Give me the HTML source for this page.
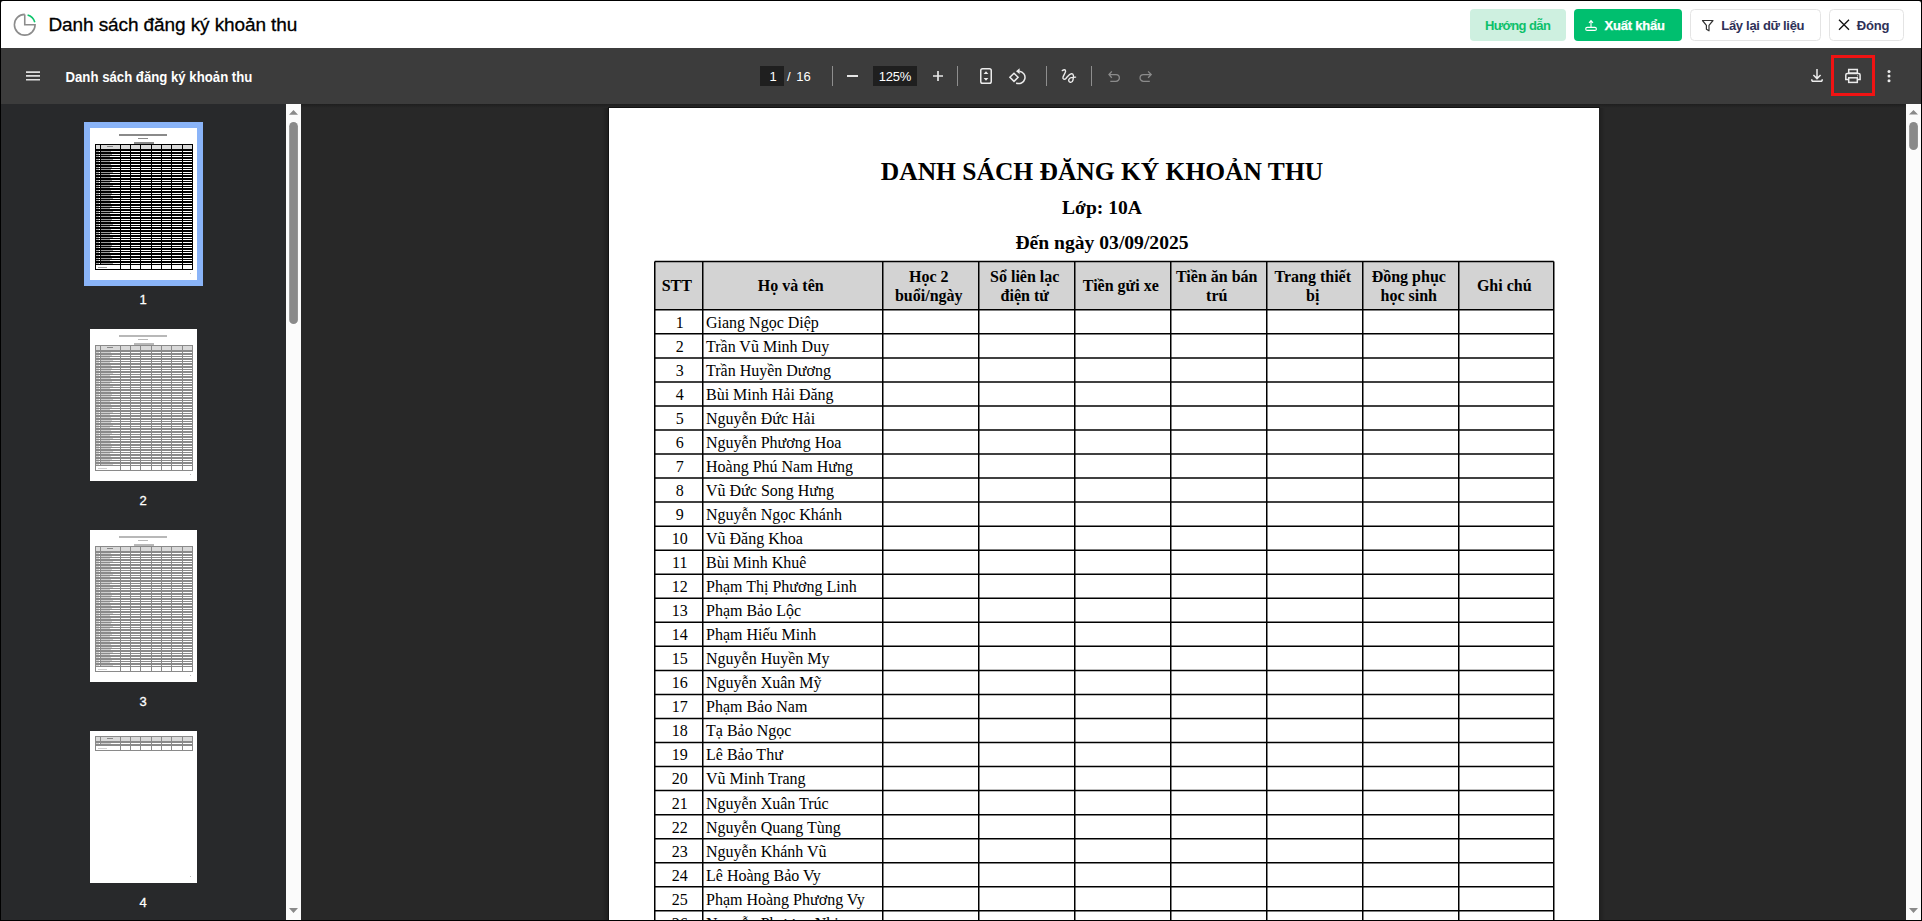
<!DOCTYPE html><html><head><meta charset="utf-8"><style>
*{margin:0;padding:0;box-sizing:border-box}
html,body{width:1922px;height:921px;overflow:hidden;background:#000;font-family:"Liberation Sans",sans-serif}
.a{position:absolute}
#hdr{left:1px;top:1px;width:1920px;height:47px;background:#fff;border-radius:2px 2px 0 0}
#tb{left:1px;top:48px;width:1920px;height:56px;background:#3c3c3c}
#side{left:1px;top:104px;width:285px;height:816px;background:#28292b}
#main{left:301px;top:104px;width:1605px;height:816px;background:#282828;overflow:hidden}
.sb{background:#fbfbfb;width:15px;height:816px;top:104px}
.btn{top:9px;height:32px;border-radius:4px;font-size:14px;font-weight:bold;line-height:32px;white-space:nowrap}
.ser{font-family:"Liberation Serif",serif;color:#000;white-space:nowrap}
</style></head><body>
<div id="hdr" class="a"></div>
<svg class="a" style="left:0;top:0" width="1922" height="48" viewBox="0 0 1922 48">
<path d="M24.75 14.6 V24.75 H35.1 A10.35 10.35 0 1 1 24.75 14.4" fill="none" stroke="#8c8c8c" stroke-width="1.6"/>
<path d="M27.6 15.1 A10.35 10.35 0 0 1 34.8 22.3" fill="none" stroke="#0dc46b" stroke-width="1.6"/>
<text x="48.5" y="30.8" font-family="Liberation Sans" font-size="19" fill="#000" stroke="#000" stroke-width="0.3" letter-spacing="-0.1">Danh sách đăng ký khoản thu</text>
<rect x="1470" y="9" width="96" height="32" rx="4" fill="#cef0e0"/>
<rect x="1574" y="9" width="108" height="32" rx="4" fill="#00bf6f"/>
<rect x="1690.5" y="9.5" width="130" height="31" rx="4" fill="#fff" stroke="#e4e4e4"/>
<rect x="1829.5" y="9.5" width="74" height="31" rx="4" fill="#fff" stroke="#e4e4e4"/>
<g font-family="Liberation Sans" font-weight="bold" font-size="13">
<text x="1485" y="30" fill="#0cc06a" letter-spacing="-0.6">Hướng dẫn</text>
<text x="1604.5" y="30.2" fill="#fff" stroke="#fff" stroke-width="0.25" letter-spacing="-0.2">Xuất khẩu</text>
<text x="1721.3" y="30" fill="#2f3158" letter-spacing="-0.3">Lấy lại dữ liệu</text>
<text x="1856.8" y="30" fill="#2f3158" letter-spacing="-0.2">Đóng</text>
</g>
<g fill="none" stroke="#fff" stroke-width="1.1">
<path d="M1591 28 V20.8 M1589 22.8 L1591 20.6 L1593 22.8"/>
<rect x="1585.7" y="27.4" width="10.7" height="3" rx="1.5"/>
</g>
<path d="M1702.5 20.5 H1713 L1709 25.3 V30.8 L1706.4 29.2 V25.3 Z" fill="none" stroke="#333" stroke-width="1.2" stroke-linejoin="round"/>
<path d="M1839 19.8 L1849 29.8 M1849 19.8 L1839 29.8" stroke="#111" stroke-width="1.3"/>
</svg>
<div id="tb" class="a">
<svg class="a" style="left:25px;top:23px" width="14" height="10"><path d="M0 1.1h14M0 4.9h14M0 8.8h14" stroke="#dedede" stroke-width="1.6"/></svg>
<div class="a" style="left:64.5px;top:22px;font-size:13.2px;font-weight:bold;color:#fff;line-height:16px;white-space:nowrap;transform:scaleY(1.1);transform-origin:0 13px">Danh sách đăng ký khoản thu</div>
<div class="a" style="left:759px;top:18px;width:24px;height:20px;background:#1f1f1f"></div>
<div class="a" style="left:760px;top:21px;width:24px;text-align:center;color:#fff;font-size:13px;line-height:16px">1</div>
<div class="a" style="left:786px;top:21px;color:#fff;font-size:13px;line-height:16px;word-spacing:2px">/ 16</div>
<div class="a" style="left:831px;top:18px;width:1px;height:20px;background:#8e8e8e"></div>
<div class="a" style="left:956px;top:18px;width:1px;height:20px;background:#8e8e8e"></div>
<div class="a" style="left:1045px;top:18px;width:1px;height:20px;background:#8e8e8e"></div>
<div class="a" style="left:1090px;top:18px;width:1px;height:20px;background:#8e8e8e"></div>
<div class="a" style="left:846px;top:27px;width:11px;height:2px;background:#e6e6e6"></div>
<div class="a" style="left:872px;top:18px;width:44px;height:20px;background:#1f1f1f"></div>
<div class="a" style="left:872px;top:21px;width:44px;text-align:center;color:#fff;font-size:13px;line-height:16px;letter-spacing:-0.2px">125%</div>
<svg class="a" style="left:931px;top:22px" width="12" height="12"><path d="M6 1v10M1 6h10" stroke="#e6e6e6" stroke-width="1.7"/></svg>
</div>

<svg class="a" style="left:1px;top:48px" width="1920" height="56" viewBox="1 48 1920 56">
 <g fill="none" stroke="#ececec" stroke-width="1.5">
  <rect x="980.75" y="68.75" width="10.5" height="14.5" rx="1.8"/>
  <path d="M1019.4 71.2 A6.2 6.2 0 1 1 1016.2 83" />
  <path d="M1014 73.2 L1018.1 77.3 L1014 81.4 L1009.9 77.3 Z" stroke-linejoin="miter"/>
  <path d="M1062.3 70.6 C1063.5 69.8 1065.5 69 1065.6 71.2 C1065.6 72.5 1063.5 75.5 1063 77.3 C1062.5 79.2 1064.5 80 1066 78.4 C1067.5 76.8 1069 74 1071.5 73.6 C1073.5 73.5 1074 76.5 1073 80 C1072.5 81.8 1071.2 82.5 1070.3 82.3 C1068.5 82 1068.3 80 1069.2 78.8 C1070 77.6 1072 77.2 1075.6 77.1" stroke-linecap="round" stroke-linejoin="round" stroke-width="1.4"/>
 </g>
 <path d="M983.6 74 L986 71.2 L988.4 74 Z M983.6 77.9 L988.4 77.9 L986 80.8 Z" fill="#ececec"/>
 <path d="M1016 71.2 L1019.6 68.3 L1019.6 74 Z" fill="#ececec"/>
 <g fill="none" stroke="#8b8b8b" stroke-width="1.3">
  <path d="M1111.8 71.4 L1109 74.6 L1111.8 77.7 M1109.2 74.6 H1116 A3.35 3.35 0 0 1 1116 81.3 H1110.3"/>
  <path d="M1148.1 71.4 L1151.2 74.6 L1148.1 77.7 M1151 74.6 H1143.4 A3.35 3.35 0 0 0 1143.4 81.3 H1149.8"/>
 </g>
 <g fill="none" stroke="#ececec" stroke-width="1.5">
  <path d="M1817 69 V78.6 M1813.4 75 L1817 78.6 L1820.6 75"/>
  <path d="M1811.8 79.2 V80.1 A1.2 1.2 0 0 0 1813 81.3 H1821 A1.2 1.2 0 0 0 1822.2 80.1 V79.2"/>
  <rect x="1848.7" y="69.5" width="8.6" height="3.6"/>
  <path d="M1848.2 79.6 H1845.8 V75 A1.5 1.5 0 0 1 1847.3 73.5 H1858.6 A1.5 1.5 0 0 1 1860.1 75 V79.6 H1857.8"/>
  <rect x="1848.7" y="77.8" width="8.6" height="4.6"/>
 </g>
 <circle cx="1857.6" cy="75.8" r="0.6" fill="#ececec"/>
 <circle cx="1889" cy="71.4" r="1.5" fill="#ececec"/>
 <circle cx="1889" cy="76.1" r="1.5" fill="#ececec"/>
 <circle cx="1889" cy="80.7" r="1.5" fill="#ececec"/>
 <rect x="1832.5" y="56.5" width="41" height="38" fill="none" stroke="#f01313" stroke-width="3"/>
</svg>

<div id="side" class="a"></div>
<div class="a" style="left:84px;top:122px;width:119px;height:164px;background:#8ab4f8"></div>
<svg class="a" style="left:90px;top:128px" width="107" height="152" viewBox="0 0 107 152" shape-rendering="crispEdges"><rect width="107" height="152" fill="#fff"/><rect x="29" y="6" width="48" height="2" fill="#8a8a8a"/><rect x="48" y="10" width="10" height="1" fill="#8a8a8a"/><rect x="44" y="14" width="20" height="2" fill="#8a8a8a"/><rect x="5" y="16" width="98" height="126" fill="#000"/><rect x="6" y="17" width="4" height="4" fill="#d9d9d9"/><rect x="11" y="17" width="19" height="4" fill="#d9d9d9"/><rect x="31" y="17" width="9" height="4" fill="#d9d9d9"/><rect x="41" y="17" width="9" height="4" fill="#d9d9d9"/><rect x="51" y="17" width="10" height="4" fill="#d9d9d9"/><rect x="62" y="17" width="9" height="4" fill="#d9d9d9"/><rect x="72" y="17" width="9" height="4" fill="#d9d9d9"/><rect x="82" y="17" width="10" height="4" fill="#d9d9d9"/><rect x="93" y="17" width="9" height="4" fill="#d9d9d9"/><rect x="17" y="18" width="6" height="1" fill="#888"/><rect x="6" y="23" width="4" height="1" fill="#fff"/><rect x="11" y="23" width="19" height="1" fill="#fff"/><rect x="31" y="23" width="9" height="1" fill="#fff"/><rect x="41" y="23" width="9" height="1" fill="#fff"/><rect x="51" y="23" width="10" height="1" fill="#fff"/><rect x="62" y="23" width="9" height="1" fill="#fff"/><rect x="72" y="23" width="9" height="1" fill="#fff"/><rect x="82" y="23" width="10" height="1" fill="#fff"/><rect x="93" y="23" width="9" height="1" fill="#fff"/><rect x="6" y="23" width="3" height="1" fill="#9a9a9a"/><rect x="11" y="23" width="10" height="1" fill="#9a9a9a"/><rect x="6" y="26" width="4" height="1" fill="#fff"/><rect x="11" y="26" width="19" height="1" fill="#fff"/><rect x="31" y="26" width="9" height="1" fill="#fff"/><rect x="41" y="26" width="9" height="1" fill="#fff"/><rect x="51" y="26" width="10" height="1" fill="#fff"/><rect x="62" y="26" width="9" height="1" fill="#fff"/><rect x="72" y="26" width="9" height="1" fill="#fff"/><rect x="82" y="26" width="10" height="1" fill="#fff"/><rect x="93" y="26" width="9" height="1" fill="#fff"/><rect x="6" y="26" width="3" height="1" fill="#9a9a9a"/><rect x="11" y="26" width="11" height="1" fill="#9a9a9a"/><rect x="6" y="28" width="4" height="1" fill="#fff"/><rect x="11" y="28" width="19" height="1" fill="#fff"/><rect x="31" y="28" width="9" height="1" fill="#fff"/><rect x="41" y="28" width="9" height="1" fill="#fff"/><rect x="51" y="28" width="10" height="1" fill="#fff"/><rect x="62" y="28" width="9" height="1" fill="#fff"/><rect x="72" y="28" width="9" height="1" fill="#fff"/><rect x="82" y="28" width="10" height="1" fill="#fff"/><rect x="93" y="28" width="9" height="1" fill="#fff"/><rect x="6" y="28" width="3" height="1" fill="#9a9a9a"/><rect x="11" y="28" width="9" height="1" fill="#9a9a9a"/><rect x="6" y="31" width="4" height="1" fill="#fff"/><rect x="11" y="31" width="19" height="1" fill="#fff"/><rect x="31" y="31" width="9" height="1" fill="#fff"/><rect x="41" y="31" width="9" height="1" fill="#fff"/><rect x="51" y="31" width="10" height="1" fill="#fff"/><rect x="62" y="31" width="9" height="1" fill="#fff"/><rect x="72" y="31" width="9" height="1" fill="#fff"/><rect x="82" y="31" width="10" height="1" fill="#fff"/><rect x="93" y="31" width="9" height="1" fill="#fff"/><rect x="6" y="31" width="3" height="1" fill="#9a9a9a"/><rect x="11" y="31" width="12" height="1" fill="#9a9a9a"/><rect x="6" y="33" width="4" height="1" fill="#fff"/><rect x="11" y="33" width="19" height="1" fill="#fff"/><rect x="31" y="33" width="9" height="1" fill="#fff"/><rect x="41" y="33" width="9" height="1" fill="#fff"/><rect x="51" y="33" width="10" height="1" fill="#fff"/><rect x="62" y="33" width="9" height="1" fill="#fff"/><rect x="72" y="33" width="9" height="1" fill="#fff"/><rect x="82" y="33" width="10" height="1" fill="#fff"/><rect x="93" y="33" width="9" height="1" fill="#fff"/><rect x="6" y="33" width="3" height="1" fill="#9a9a9a"/><rect x="11" y="33" width="9" height="1" fill="#9a9a9a"/><rect x="6" y="36" width="4" height="1" fill="#fff"/><rect x="11" y="36" width="19" height="1" fill="#fff"/><rect x="31" y="36" width="9" height="1" fill="#fff"/><rect x="41" y="36" width="9" height="1" fill="#fff"/><rect x="51" y="36" width="10" height="1" fill="#fff"/><rect x="62" y="36" width="9" height="1" fill="#fff"/><rect x="72" y="36" width="9" height="1" fill="#fff"/><rect x="82" y="36" width="10" height="1" fill="#fff"/><rect x="93" y="36" width="9" height="1" fill="#fff"/><rect x="6" y="36" width="3" height="1" fill="#9a9a9a"/><rect x="11" y="36" width="10" height="1" fill="#9a9a9a"/><rect x="6" y="39" width="4" height="1" fill="#fff"/><rect x="11" y="39" width="19" height="1" fill="#fff"/><rect x="31" y="39" width="9" height="1" fill="#fff"/><rect x="41" y="39" width="9" height="1" fill="#fff"/><rect x="51" y="39" width="10" height="1" fill="#fff"/><rect x="62" y="39" width="9" height="1" fill="#fff"/><rect x="72" y="39" width="9" height="1" fill="#fff"/><rect x="82" y="39" width="10" height="1" fill="#fff"/><rect x="93" y="39" width="9" height="1" fill="#fff"/><rect x="6" y="39" width="3" height="1" fill="#9a9a9a"/><rect x="11" y="39" width="11" height="1" fill="#9a9a9a"/><rect x="6" y="41" width="4" height="1" fill="#fff"/><rect x="11" y="41" width="19" height="1" fill="#fff"/><rect x="31" y="41" width="9" height="1" fill="#fff"/><rect x="41" y="41" width="9" height="1" fill="#fff"/><rect x="51" y="41" width="10" height="1" fill="#fff"/><rect x="62" y="41" width="9" height="1" fill="#fff"/><rect x="72" y="41" width="9" height="1" fill="#fff"/><rect x="82" y="41" width="10" height="1" fill="#fff"/><rect x="93" y="41" width="9" height="1" fill="#fff"/><rect x="6" y="41" width="3" height="1" fill="#9a9a9a"/><rect x="11" y="41" width="10" height="1" fill="#9a9a9a"/><rect x="6" y="44" width="4" height="1" fill="#fff"/><rect x="11" y="44" width="19" height="1" fill="#fff"/><rect x="31" y="44" width="9" height="1" fill="#fff"/><rect x="41" y="44" width="9" height="1" fill="#fff"/><rect x="51" y="44" width="10" height="1" fill="#fff"/><rect x="62" y="44" width="9" height="1" fill="#fff"/><rect x="72" y="44" width="9" height="1" fill="#fff"/><rect x="82" y="44" width="10" height="1" fill="#fff"/><rect x="93" y="44" width="9" height="1" fill="#fff"/><rect x="6" y="44" width="3" height="1" fill="#9a9a9a"/><rect x="11" y="44" width="12" height="1" fill="#9a9a9a"/><rect x="6" y="46" width="4" height="1" fill="#fff"/><rect x="11" y="46" width="19" height="1" fill="#fff"/><rect x="31" y="46" width="9" height="1" fill="#fff"/><rect x="41" y="46" width="9" height="1" fill="#fff"/><rect x="51" y="46" width="10" height="1" fill="#fff"/><rect x="62" y="46" width="9" height="1" fill="#fff"/><rect x="72" y="46" width="9" height="1" fill="#fff"/><rect x="82" y="46" width="10" height="1" fill="#fff"/><rect x="93" y="46" width="9" height="1" fill="#fff"/><rect x="6" y="46" width="3" height="1" fill="#9a9a9a"/><rect x="11" y="46" width="9" height="1" fill="#9a9a9a"/><rect x="6" y="49" width="4" height="1" fill="#fff"/><rect x="11" y="49" width="19" height="1" fill="#fff"/><rect x="31" y="49" width="9" height="1" fill="#fff"/><rect x="41" y="49" width="9" height="1" fill="#fff"/><rect x="51" y="49" width="10" height="1" fill="#fff"/><rect x="62" y="49" width="9" height="1" fill="#fff"/><rect x="72" y="49" width="9" height="1" fill="#fff"/><rect x="82" y="49" width="10" height="1" fill="#fff"/><rect x="93" y="49" width="9" height="1" fill="#fff"/><rect x="6" y="49" width="3" height="1" fill="#9a9a9a"/><rect x="11" y="49" width="10" height="1" fill="#9a9a9a"/><rect x="6" y="52" width="4" height="1" fill="#fff"/><rect x="11" y="52" width="19" height="1" fill="#fff"/><rect x="31" y="52" width="9" height="1" fill="#fff"/><rect x="41" y="52" width="9" height="1" fill="#fff"/><rect x="51" y="52" width="10" height="1" fill="#fff"/><rect x="62" y="52" width="9" height="1" fill="#fff"/><rect x="72" y="52" width="9" height="1" fill="#fff"/><rect x="82" y="52" width="10" height="1" fill="#fff"/><rect x="93" y="52" width="9" height="1" fill="#fff"/><rect x="6" y="52" width="3" height="1" fill="#9a9a9a"/><rect x="11" y="52" width="11" height="1" fill="#9a9a9a"/><rect x="6" y="54" width="4" height="1" fill="#fff"/><rect x="11" y="54" width="19" height="1" fill="#fff"/><rect x="31" y="54" width="9" height="1" fill="#fff"/><rect x="41" y="54" width="9" height="1" fill="#fff"/><rect x="51" y="54" width="10" height="1" fill="#fff"/><rect x="62" y="54" width="9" height="1" fill="#fff"/><rect x="72" y="54" width="9" height="1" fill="#fff"/><rect x="82" y="54" width="10" height="1" fill="#fff"/><rect x="93" y="54" width="9" height="1" fill="#fff"/><rect x="6" y="54" width="3" height="1" fill="#9a9a9a"/><rect x="11" y="54" width="9" height="1" fill="#9a9a9a"/><rect x="6" y="57" width="4" height="1" fill="#fff"/><rect x="11" y="57" width="19" height="1" fill="#fff"/><rect x="31" y="57" width="9" height="1" fill="#fff"/><rect x="41" y="57" width="9" height="1" fill="#fff"/><rect x="51" y="57" width="10" height="1" fill="#fff"/><rect x="62" y="57" width="9" height="1" fill="#fff"/><rect x="72" y="57" width="9" height="1" fill="#fff"/><rect x="82" y="57" width="10" height="1" fill="#fff"/><rect x="93" y="57" width="9" height="1" fill="#fff"/><rect x="6" y="57" width="3" height="1" fill="#9a9a9a"/><rect x="11" y="57" width="12" height="1" fill="#9a9a9a"/><rect x="6" y="59" width="4" height="1" fill="#fff"/><rect x="11" y="59" width="19" height="1" fill="#fff"/><rect x="31" y="59" width="9" height="1" fill="#fff"/><rect x="41" y="59" width="9" height="1" fill="#fff"/><rect x="51" y="59" width="10" height="1" fill="#fff"/><rect x="62" y="59" width="9" height="1" fill="#fff"/><rect x="72" y="59" width="9" height="1" fill="#fff"/><rect x="82" y="59" width="10" height="1" fill="#fff"/><rect x="93" y="59" width="9" height="1" fill="#fff"/><rect x="6" y="59" width="3" height="1" fill="#9a9a9a"/><rect x="11" y="59" width="9" height="1" fill="#9a9a9a"/><rect x="6" y="62" width="4" height="1" fill="#fff"/><rect x="11" y="62" width="19" height="1" fill="#fff"/><rect x="31" y="62" width="9" height="1" fill="#fff"/><rect x="41" y="62" width="9" height="1" fill="#fff"/><rect x="51" y="62" width="10" height="1" fill="#fff"/><rect x="62" y="62" width="9" height="1" fill="#fff"/><rect x="72" y="62" width="9" height="1" fill="#fff"/><rect x="82" y="62" width="10" height="1" fill="#fff"/><rect x="93" y="62" width="9" height="1" fill="#fff"/><rect x="6" y="62" width="3" height="1" fill="#9a9a9a"/><rect x="11" y="62" width="10" height="1" fill="#9a9a9a"/><rect x="6" y="65" width="4" height="1" fill="#fff"/><rect x="11" y="65" width="19" height="1" fill="#fff"/><rect x="31" y="65" width="9" height="1" fill="#fff"/><rect x="41" y="65" width="9" height="1" fill="#fff"/><rect x="51" y="65" width="10" height="1" fill="#fff"/><rect x="62" y="65" width="9" height="1" fill="#fff"/><rect x="72" y="65" width="9" height="1" fill="#fff"/><rect x="82" y="65" width="10" height="1" fill="#fff"/><rect x="93" y="65" width="9" height="1" fill="#fff"/><rect x="6" y="65" width="3" height="1" fill="#9a9a9a"/><rect x="11" y="65" width="11" height="1" fill="#9a9a9a"/><rect x="6" y="67" width="4" height="1" fill="#fff"/><rect x="11" y="67" width="19" height="1" fill="#fff"/><rect x="31" y="67" width="9" height="1" fill="#fff"/><rect x="41" y="67" width="9" height="1" fill="#fff"/><rect x="51" y="67" width="10" height="1" fill="#fff"/><rect x="62" y="67" width="9" height="1" fill="#fff"/><rect x="72" y="67" width="9" height="1" fill="#fff"/><rect x="82" y="67" width="10" height="1" fill="#fff"/><rect x="93" y="67" width="9" height="1" fill="#fff"/><rect x="6" y="67" width="3" height="1" fill="#9a9a9a"/><rect x="11" y="67" width="10" height="1" fill="#9a9a9a"/><rect x="6" y="70" width="4" height="1" fill="#fff"/><rect x="11" y="70" width="19" height="1" fill="#fff"/><rect x="31" y="70" width="9" height="1" fill="#fff"/><rect x="41" y="70" width="9" height="1" fill="#fff"/><rect x="51" y="70" width="10" height="1" fill="#fff"/><rect x="62" y="70" width="9" height="1" fill="#fff"/><rect x="72" y="70" width="9" height="1" fill="#fff"/><rect x="82" y="70" width="10" height="1" fill="#fff"/><rect x="93" y="70" width="9" height="1" fill="#fff"/><rect x="6" y="70" width="3" height="1" fill="#9a9a9a"/><rect x="11" y="70" width="12" height="1" fill="#9a9a9a"/><rect x="6" y="72" width="4" height="1" fill="#fff"/><rect x="11" y="72" width="19" height="1" fill="#fff"/><rect x="31" y="72" width="9" height="1" fill="#fff"/><rect x="41" y="72" width="9" height="1" fill="#fff"/><rect x="51" y="72" width="10" height="1" fill="#fff"/><rect x="62" y="72" width="9" height="1" fill="#fff"/><rect x="72" y="72" width="9" height="1" fill="#fff"/><rect x="82" y="72" width="10" height="1" fill="#fff"/><rect x="93" y="72" width="9" height="1" fill="#fff"/><rect x="6" y="72" width="3" height="1" fill="#9a9a9a"/><rect x="11" y="72" width="9" height="1" fill="#9a9a9a"/><rect x="6" y="75" width="4" height="1" fill="#fff"/><rect x="11" y="75" width="19" height="1" fill="#fff"/><rect x="31" y="75" width="9" height="1" fill="#fff"/><rect x="41" y="75" width="9" height="1" fill="#fff"/><rect x="51" y="75" width="10" height="1" fill="#fff"/><rect x="62" y="75" width="9" height="1" fill="#fff"/><rect x="72" y="75" width="9" height="1" fill="#fff"/><rect x="82" y="75" width="10" height="1" fill="#fff"/><rect x="93" y="75" width="9" height="1" fill="#fff"/><rect x="6" y="75" width="3" height="1" fill="#9a9a9a"/><rect x="11" y="75" width="10" height="1" fill="#9a9a9a"/><rect x="6" y="78" width="4" height="1" fill="#fff"/><rect x="11" y="78" width="19" height="1" fill="#fff"/><rect x="31" y="78" width="9" height="1" fill="#fff"/><rect x="41" y="78" width="9" height="1" fill="#fff"/><rect x="51" y="78" width="10" height="1" fill="#fff"/><rect x="62" y="78" width="9" height="1" fill="#fff"/><rect x="72" y="78" width="9" height="1" fill="#fff"/><rect x="82" y="78" width="10" height="1" fill="#fff"/><rect x="93" y="78" width="9" height="1" fill="#fff"/><rect x="6" y="78" width="3" height="1" fill="#9a9a9a"/><rect x="11" y="78" width="11" height="1" fill="#9a9a9a"/><rect x="6" y="80" width="4" height="1" fill="#fff"/><rect x="11" y="80" width="19" height="1" fill="#fff"/><rect x="31" y="80" width="9" height="1" fill="#fff"/><rect x="41" y="80" width="9" height="1" fill="#fff"/><rect x="51" y="80" width="10" height="1" fill="#fff"/><rect x="62" y="80" width="9" height="1" fill="#fff"/><rect x="72" y="80" width="9" height="1" fill="#fff"/><rect x="82" y="80" width="10" height="1" fill="#fff"/><rect x="93" y="80" width="9" height="1" fill="#fff"/><rect x="6" y="80" width="3" height="1" fill="#9a9a9a"/><rect x="11" y="80" width="9" height="1" fill="#9a9a9a"/><rect x="6" y="83" width="4" height="1" fill="#fff"/><rect x="11" y="83" width="19" height="1" fill="#fff"/><rect x="31" y="83" width="9" height="1" fill="#fff"/><rect x="41" y="83" width="9" height="1" fill="#fff"/><rect x="51" y="83" width="10" height="1" fill="#fff"/><rect x="62" y="83" width="9" height="1" fill="#fff"/><rect x="72" y="83" width="9" height="1" fill="#fff"/><rect x="82" y="83" width="10" height="1" fill="#fff"/><rect x="93" y="83" width="9" height="1" fill="#fff"/><rect x="6" y="83" width="3" height="1" fill="#9a9a9a"/><rect x="11" y="83" width="12" height="1" fill="#9a9a9a"/><rect x="6" y="85" width="4" height="1" fill="#fff"/><rect x="11" y="85" width="19" height="1" fill="#fff"/><rect x="31" y="85" width="9" height="1" fill="#fff"/><rect x="41" y="85" width="9" height="1" fill="#fff"/><rect x="51" y="85" width="10" height="1" fill="#fff"/><rect x="62" y="85" width="9" height="1" fill="#fff"/><rect x="72" y="85" width="9" height="1" fill="#fff"/><rect x="82" y="85" width="10" height="1" fill="#fff"/><rect x="93" y="85" width="9" height="1" fill="#fff"/><rect x="6" y="85" width="3" height="1" fill="#9a9a9a"/><rect x="11" y="85" width="9" height="1" fill="#9a9a9a"/><rect x="6" y="88" width="4" height="1" fill="#fff"/><rect x="11" y="88" width="19" height="1" fill="#fff"/><rect x="31" y="88" width="9" height="1" fill="#fff"/><rect x="41" y="88" width="9" height="1" fill="#fff"/><rect x="51" y="88" width="10" height="1" fill="#fff"/><rect x="62" y="88" width="9" height="1" fill="#fff"/><rect x="72" y="88" width="9" height="1" fill="#fff"/><rect x="82" y="88" width="10" height="1" fill="#fff"/><rect x="93" y="88" width="9" height="1" fill="#fff"/><rect x="6" y="88" width="3" height="1" fill="#9a9a9a"/><rect x="11" y="88" width="10" height="1" fill="#9a9a9a"/><rect x="6" y="91" width="4" height="1" fill="#fff"/><rect x="11" y="91" width="19" height="1" fill="#fff"/><rect x="31" y="91" width="9" height="1" fill="#fff"/><rect x="41" y="91" width="9" height="1" fill="#fff"/><rect x="51" y="91" width="10" height="1" fill="#fff"/><rect x="62" y="91" width="9" height="1" fill="#fff"/><rect x="72" y="91" width="9" height="1" fill="#fff"/><rect x="82" y="91" width="10" height="1" fill="#fff"/><rect x="93" y="91" width="9" height="1" fill="#fff"/><rect x="6" y="91" width="3" height="1" fill="#9a9a9a"/><rect x="11" y="91" width="11" height="1" fill="#9a9a9a"/><rect x="6" y="93" width="4" height="1" fill="#fff"/><rect x="11" y="93" width="19" height="1" fill="#fff"/><rect x="31" y="93" width="9" height="1" fill="#fff"/><rect x="41" y="93" width="9" height="1" fill="#fff"/><rect x="51" y="93" width="10" height="1" fill="#fff"/><rect x="62" y="93" width="9" height="1" fill="#fff"/><rect x="72" y="93" width="9" height="1" fill="#fff"/><rect x="82" y="93" width="10" height="1" fill="#fff"/><rect x="93" y="93" width="9" height="1" fill="#fff"/><rect x="6" y="93" width="3" height="1" fill="#9a9a9a"/><rect x="11" y="93" width="10" height="1" fill="#9a9a9a"/><rect x="6" y="96" width="4" height="1" fill="#fff"/><rect x="11" y="96" width="19" height="1" fill="#fff"/><rect x="31" y="96" width="9" height="1" fill="#fff"/><rect x="41" y="96" width="9" height="1" fill="#fff"/><rect x="51" y="96" width="10" height="1" fill="#fff"/><rect x="62" y="96" width="9" height="1" fill="#fff"/><rect x="72" y="96" width="9" height="1" fill="#fff"/><rect x="82" y="96" width="10" height="1" fill="#fff"/><rect x="93" y="96" width="9" height="1" fill="#fff"/><rect x="6" y="96" width="3" height="1" fill="#9a9a9a"/><rect x="11" y="96" width="12" height="1" fill="#9a9a9a"/><rect x="6" y="98" width="4" height="1" fill="#fff"/><rect x="11" y="98" width="19" height="1" fill="#fff"/><rect x="31" y="98" width="9" height="1" fill="#fff"/><rect x="41" y="98" width="9" height="1" fill="#fff"/><rect x="51" y="98" width="10" height="1" fill="#fff"/><rect x="62" y="98" width="9" height="1" fill="#fff"/><rect x="72" y="98" width="9" height="1" fill="#fff"/><rect x="82" y="98" width="10" height="1" fill="#fff"/><rect x="93" y="98" width="9" height="1" fill="#fff"/><rect x="6" y="98" width="3" height="1" fill="#9a9a9a"/><rect x="11" y="98" width="9" height="1" fill="#9a9a9a"/><rect x="6" y="101" width="4" height="1" fill="#fff"/><rect x="11" y="101" width="19" height="1" fill="#fff"/><rect x="31" y="101" width="9" height="1" fill="#fff"/><rect x="41" y="101" width="9" height="1" fill="#fff"/><rect x="51" y="101" width="10" height="1" fill="#fff"/><rect x="62" y="101" width="9" height="1" fill="#fff"/><rect x="72" y="101" width="9" height="1" fill="#fff"/><rect x="82" y="101" width="10" height="1" fill="#fff"/><rect x="93" y="101" width="9" height="1" fill="#fff"/><rect x="6" y="101" width="3" height="1" fill="#9a9a9a"/><rect x="11" y="101" width="10" height="1" fill="#9a9a9a"/><rect x="6" y="104" width="4" height="1" fill="#fff"/><rect x="11" y="104" width="19" height="1" fill="#fff"/><rect x="31" y="104" width="9" height="1" fill="#fff"/><rect x="41" y="104" width="9" height="1" fill="#fff"/><rect x="51" y="104" width="10" height="1" fill="#fff"/><rect x="62" y="104" width="9" height="1" fill="#fff"/><rect x="72" y="104" width="9" height="1" fill="#fff"/><rect x="82" y="104" width="10" height="1" fill="#fff"/><rect x="93" y="104" width="9" height="1" fill="#fff"/><rect x="6" y="104" width="3" height="1" fill="#9a9a9a"/><rect x="11" y="104" width="11" height="1" fill="#9a9a9a"/><rect x="6" y="106" width="4" height="1" fill="#fff"/><rect x="11" y="106" width="19" height="1" fill="#fff"/><rect x="31" y="106" width="9" height="1" fill="#fff"/><rect x="41" y="106" width="9" height="1" fill="#fff"/><rect x="51" y="106" width="10" height="1" fill="#fff"/><rect x="62" y="106" width="9" height="1" fill="#fff"/><rect x="72" y="106" width="9" height="1" fill="#fff"/><rect x="82" y="106" width="10" height="1" fill="#fff"/><rect x="93" y="106" width="9" height="1" fill="#fff"/><rect x="6" y="106" width="3" height="1" fill="#9a9a9a"/><rect x="11" y="106" width="9" height="1" fill="#9a9a9a"/><rect x="6" y="109" width="4" height="1" fill="#fff"/><rect x="11" y="109" width="19" height="1" fill="#fff"/><rect x="31" y="109" width="9" height="1" fill="#fff"/><rect x="41" y="109" width="9" height="1" fill="#fff"/><rect x="51" y="109" width="10" height="1" fill="#fff"/><rect x="62" y="109" width="9" height="1" fill="#fff"/><rect x="72" y="109" width="9" height="1" fill="#fff"/><rect x="82" y="109" width="10" height="1" fill="#fff"/><rect x="93" y="109" width="9" height="1" fill="#fff"/><rect x="6" y="109" width="3" height="1" fill="#9a9a9a"/><rect x="11" y="109" width="12" height="1" fill="#9a9a9a"/><rect x="6" y="111" width="4" height="1" fill="#fff"/><rect x="11" y="111" width="19" height="1" fill="#fff"/><rect x="31" y="111" width="9" height="1" fill="#fff"/><rect x="41" y="111" width="9" height="1" fill="#fff"/><rect x="51" y="111" width="10" height="1" fill="#fff"/><rect x="62" y="111" width="9" height="1" fill="#fff"/><rect x="72" y="111" width="9" height="1" fill="#fff"/><rect x="82" y="111" width="10" height="1" fill="#fff"/><rect x="93" y="111" width="9" height="1" fill="#fff"/><rect x="6" y="111" width="3" height="1" fill="#9a9a9a"/><rect x="11" y="111" width="9" height="1" fill="#9a9a9a"/><rect x="6" y="114" width="4" height="1" fill="#fff"/><rect x="11" y="114" width="19" height="1" fill="#fff"/><rect x="31" y="114" width="9" height="1" fill="#fff"/><rect x="41" y="114" width="9" height="1" fill="#fff"/><rect x="51" y="114" width="10" height="1" fill="#fff"/><rect x="62" y="114" width="9" height="1" fill="#fff"/><rect x="72" y="114" width="9" height="1" fill="#fff"/><rect x="82" y="114" width="10" height="1" fill="#fff"/><rect x="93" y="114" width="9" height="1" fill="#fff"/><rect x="6" y="114" width="3" height="1" fill="#9a9a9a"/><rect x="11" y="114" width="10" height="1" fill="#9a9a9a"/><rect x="6" y="117" width="4" height="1" fill="#fff"/><rect x="11" y="117" width="19" height="1" fill="#fff"/><rect x="31" y="117" width="9" height="1" fill="#fff"/><rect x="41" y="117" width="9" height="1" fill="#fff"/><rect x="51" y="117" width="10" height="1" fill="#fff"/><rect x="62" y="117" width="9" height="1" fill="#fff"/><rect x="72" y="117" width="9" height="1" fill="#fff"/><rect x="82" y="117" width="10" height="1" fill="#fff"/><rect x="93" y="117" width="9" height="1" fill="#fff"/><rect x="6" y="117" width="3" height="1" fill="#9a9a9a"/><rect x="11" y="117" width="11" height="1" fill="#9a9a9a"/><rect x="6" y="119" width="4" height="1" fill="#fff"/><rect x="11" y="119" width="19" height="1" fill="#fff"/><rect x="31" y="119" width="9" height="1" fill="#fff"/><rect x="41" y="119" width="9" height="1" fill="#fff"/><rect x="51" y="119" width="10" height="1" fill="#fff"/><rect x="62" y="119" width="9" height="1" fill="#fff"/><rect x="72" y="119" width="9" height="1" fill="#fff"/><rect x="82" y="119" width="10" height="1" fill="#fff"/><rect x="93" y="119" width="9" height="1" fill="#fff"/><rect x="6" y="119" width="3" height="1" fill="#9a9a9a"/><rect x="11" y="119" width="10" height="1" fill="#9a9a9a"/><rect x="6" y="122" width="4" height="1" fill="#fff"/><rect x="11" y="122" width="19" height="1" fill="#fff"/><rect x="31" y="122" width="9" height="1" fill="#fff"/><rect x="41" y="122" width="9" height="1" fill="#fff"/><rect x="51" y="122" width="10" height="1" fill="#fff"/><rect x="62" y="122" width="9" height="1" fill="#fff"/><rect x="72" y="122" width="9" height="1" fill="#fff"/><rect x="82" y="122" width="10" height="1" fill="#fff"/><rect x="93" y="122" width="9" height="1" fill="#fff"/><rect x="6" y="122" width="3" height="1" fill="#9a9a9a"/><rect x="11" y="122" width="12" height="1" fill="#9a9a9a"/><rect x="6" y="124" width="4" height="1" fill="#fff"/><rect x="11" y="124" width="19" height="1" fill="#fff"/><rect x="31" y="124" width="9" height="1" fill="#fff"/><rect x="41" y="124" width="9" height="1" fill="#fff"/><rect x="51" y="124" width="10" height="1" fill="#fff"/><rect x="62" y="124" width="9" height="1" fill="#fff"/><rect x="72" y="124" width="9" height="1" fill="#fff"/><rect x="82" y="124" width="10" height="1" fill="#fff"/><rect x="93" y="124" width="9" height="1" fill="#fff"/><rect x="6" y="124" width="3" height="1" fill="#9a9a9a"/><rect x="11" y="124" width="9" height="1" fill="#9a9a9a"/><rect x="6" y="127" width="4" height="1" fill="#fff"/><rect x="11" y="127" width="19" height="1" fill="#fff"/><rect x="31" y="127" width="9" height="1" fill="#fff"/><rect x="41" y="127" width="9" height="1" fill="#fff"/><rect x="51" y="127" width="10" height="1" fill="#fff"/><rect x="62" y="127" width="9" height="1" fill="#fff"/><rect x="72" y="127" width="9" height="1" fill="#fff"/><rect x="82" y="127" width="10" height="1" fill="#fff"/><rect x="93" y="127" width="9" height="1" fill="#fff"/><rect x="6" y="127" width="3" height="1" fill="#9a9a9a"/><rect x="11" y="127" width="10" height="1" fill="#9a9a9a"/><rect x="6" y="130" width="4" height="1" fill="#fff"/><rect x="11" y="130" width="19" height="1" fill="#fff"/><rect x="31" y="130" width="9" height="1" fill="#fff"/><rect x="41" y="130" width="9" height="1" fill="#fff"/><rect x="51" y="130" width="10" height="1" fill="#fff"/><rect x="62" y="130" width="9" height="1" fill="#fff"/><rect x="72" y="130" width="9" height="1" fill="#fff"/><rect x="82" y="130" width="10" height="1" fill="#fff"/><rect x="93" y="130" width="9" height="1" fill="#fff"/><rect x="6" y="130" width="3" height="1" fill="#9a9a9a"/><rect x="11" y="130" width="11" height="1" fill="#9a9a9a"/><rect x="6" y="132" width="4" height="1" fill="#fff"/><rect x="11" y="132" width="19" height="1" fill="#fff"/><rect x="31" y="132" width="9" height="1" fill="#fff"/><rect x="41" y="132" width="9" height="1" fill="#fff"/><rect x="51" y="132" width="10" height="1" fill="#fff"/><rect x="62" y="132" width="9" height="1" fill="#fff"/><rect x="72" y="132" width="9" height="1" fill="#fff"/><rect x="82" y="132" width="10" height="1" fill="#fff"/><rect x="93" y="132" width="9" height="1" fill="#fff"/><rect x="6" y="132" width="3" height="1" fill="#9a9a9a"/><rect x="11" y="132" width="9" height="1" fill="#9a9a9a"/><rect x="6" y="135" width="4" height="1" fill="#fff"/><rect x="11" y="135" width="19" height="1" fill="#fff"/><rect x="31" y="135" width="9" height="1" fill="#fff"/><rect x="41" y="135" width="9" height="1" fill="#fff"/><rect x="51" y="135" width="10" height="1" fill="#fff"/><rect x="62" y="135" width="9" height="1" fill="#fff"/><rect x="72" y="135" width="9" height="1" fill="#fff"/><rect x="82" y="135" width="10" height="1" fill="#fff"/><rect x="93" y="135" width="9" height="1" fill="#fff"/><rect x="6" y="135" width="3" height="1" fill="#9a9a9a"/><rect x="11" y="135" width="12" height="1" fill="#9a9a9a"/><rect x="6" y="137" width="24" height="4" fill="#fff"/><rect x="31" y="137" width="9" height="4" fill="#fff"/><rect x="41" y="137" width="9" height="4" fill="#fff"/><rect x="51" y="137" width="10" height="4" fill="#fff"/><rect x="62" y="137" width="9" height="4" fill="#fff"/><rect x="72" y="137" width="9" height="4" fill="#fff"/><rect x="82" y="137" width="10" height="4" fill="#fff"/><rect x="93" y="137" width="9" height="4" fill="#fff"/><rect x="8" y="139" width="9" height="1" fill="#9a9a9a"/><rect x="100" y="145" width="1" height="1" fill="#bbb"/></svg>
<svg class="a" style="left:90px;top:329px" width="107" height="152" viewBox="0 0 107 152" shape-rendering="crispEdges"><rect width="107" height="152" fill="#fff"/><rect x="29" y="6" width="48" height="2" fill="#b8b8b8"/><rect x="48" y="10" width="10" height="1" fill="#b8b8b8"/><rect x="44" y="14" width="20" height="2" fill="#b8b8b8"/><rect x="5" y="16" width="98" height="126" fill="#8a8a8a"/><rect x="6" y="17" width="4" height="4" fill="#d9d9d9"/><rect x="11" y="17" width="19" height="4" fill="#d9d9d9"/><rect x="31" y="17" width="9" height="4" fill="#d9d9d9"/><rect x="41" y="17" width="9" height="4" fill="#d9d9d9"/><rect x="51" y="17" width="10" height="4" fill="#d9d9d9"/><rect x="62" y="17" width="9" height="4" fill="#d9d9d9"/><rect x="72" y="17" width="9" height="4" fill="#d9d9d9"/><rect x="82" y="17" width="10" height="4" fill="#d9d9d9"/><rect x="93" y="17" width="9" height="4" fill="#d9d9d9"/><rect x="17" y="18" width="6" height="1" fill="#888"/><rect x="6" y="23" width="4" height="1" fill="#fff"/><rect x="11" y="23" width="19" height="1" fill="#fff"/><rect x="31" y="23" width="9" height="1" fill="#fff"/><rect x="41" y="23" width="9" height="1" fill="#fff"/><rect x="51" y="23" width="10" height="1" fill="#fff"/><rect x="62" y="23" width="9" height="1" fill="#fff"/><rect x="72" y="23" width="9" height="1" fill="#fff"/><rect x="82" y="23" width="10" height="1" fill="#fff"/><rect x="93" y="23" width="9" height="1" fill="#fff"/><rect x="6" y="23" width="3" height="1" fill="#cfcfcf"/><rect x="11" y="23" width="10" height="1" fill="#cfcfcf"/><rect x="6" y="26" width="4" height="1" fill="#fff"/><rect x="11" y="26" width="19" height="1" fill="#fff"/><rect x="31" y="26" width="9" height="1" fill="#fff"/><rect x="41" y="26" width="9" height="1" fill="#fff"/><rect x="51" y="26" width="10" height="1" fill="#fff"/><rect x="62" y="26" width="9" height="1" fill="#fff"/><rect x="72" y="26" width="9" height="1" fill="#fff"/><rect x="82" y="26" width="10" height="1" fill="#fff"/><rect x="93" y="26" width="9" height="1" fill="#fff"/><rect x="6" y="26" width="3" height="1" fill="#cfcfcf"/><rect x="11" y="26" width="11" height="1" fill="#cfcfcf"/><rect x="6" y="28" width="4" height="1" fill="#fff"/><rect x="11" y="28" width="19" height="1" fill="#fff"/><rect x="31" y="28" width="9" height="1" fill="#fff"/><rect x="41" y="28" width="9" height="1" fill="#fff"/><rect x="51" y="28" width="10" height="1" fill="#fff"/><rect x="62" y="28" width="9" height="1" fill="#fff"/><rect x="72" y="28" width="9" height="1" fill="#fff"/><rect x="82" y="28" width="10" height="1" fill="#fff"/><rect x="93" y="28" width="9" height="1" fill="#fff"/><rect x="6" y="28" width="3" height="1" fill="#cfcfcf"/><rect x="11" y="28" width="9" height="1" fill="#cfcfcf"/><rect x="6" y="31" width="4" height="1" fill="#fff"/><rect x="11" y="31" width="19" height="1" fill="#fff"/><rect x="31" y="31" width="9" height="1" fill="#fff"/><rect x="41" y="31" width="9" height="1" fill="#fff"/><rect x="51" y="31" width="10" height="1" fill="#fff"/><rect x="62" y="31" width="9" height="1" fill="#fff"/><rect x="72" y="31" width="9" height="1" fill="#fff"/><rect x="82" y="31" width="10" height="1" fill="#fff"/><rect x="93" y="31" width="9" height="1" fill="#fff"/><rect x="6" y="31" width="3" height="1" fill="#cfcfcf"/><rect x="11" y="31" width="12" height="1" fill="#cfcfcf"/><rect x="6" y="33" width="4" height="1" fill="#fff"/><rect x="11" y="33" width="19" height="1" fill="#fff"/><rect x="31" y="33" width="9" height="1" fill="#fff"/><rect x="41" y="33" width="9" height="1" fill="#fff"/><rect x="51" y="33" width="10" height="1" fill="#fff"/><rect x="62" y="33" width="9" height="1" fill="#fff"/><rect x="72" y="33" width="9" height="1" fill="#fff"/><rect x="82" y="33" width="10" height="1" fill="#fff"/><rect x="93" y="33" width="9" height="1" fill="#fff"/><rect x="6" y="33" width="3" height="1" fill="#cfcfcf"/><rect x="11" y="33" width="9" height="1" fill="#cfcfcf"/><rect x="6" y="36" width="4" height="1" fill="#fff"/><rect x="11" y="36" width="19" height="1" fill="#fff"/><rect x="31" y="36" width="9" height="1" fill="#fff"/><rect x="41" y="36" width="9" height="1" fill="#fff"/><rect x="51" y="36" width="10" height="1" fill="#fff"/><rect x="62" y="36" width="9" height="1" fill="#fff"/><rect x="72" y="36" width="9" height="1" fill="#fff"/><rect x="82" y="36" width="10" height="1" fill="#fff"/><rect x="93" y="36" width="9" height="1" fill="#fff"/><rect x="6" y="36" width="3" height="1" fill="#cfcfcf"/><rect x="11" y="36" width="10" height="1" fill="#cfcfcf"/><rect x="6" y="39" width="4" height="1" fill="#fff"/><rect x="11" y="39" width="19" height="1" fill="#fff"/><rect x="31" y="39" width="9" height="1" fill="#fff"/><rect x="41" y="39" width="9" height="1" fill="#fff"/><rect x="51" y="39" width="10" height="1" fill="#fff"/><rect x="62" y="39" width="9" height="1" fill="#fff"/><rect x="72" y="39" width="9" height="1" fill="#fff"/><rect x="82" y="39" width="10" height="1" fill="#fff"/><rect x="93" y="39" width="9" height="1" fill="#fff"/><rect x="6" y="39" width="3" height="1" fill="#cfcfcf"/><rect x="11" y="39" width="11" height="1" fill="#cfcfcf"/><rect x="6" y="41" width="4" height="1" fill="#fff"/><rect x="11" y="41" width="19" height="1" fill="#fff"/><rect x="31" y="41" width="9" height="1" fill="#fff"/><rect x="41" y="41" width="9" height="1" fill="#fff"/><rect x="51" y="41" width="10" height="1" fill="#fff"/><rect x="62" y="41" width="9" height="1" fill="#fff"/><rect x="72" y="41" width="9" height="1" fill="#fff"/><rect x="82" y="41" width="10" height="1" fill="#fff"/><rect x="93" y="41" width="9" height="1" fill="#fff"/><rect x="6" y="41" width="3" height="1" fill="#cfcfcf"/><rect x="11" y="41" width="10" height="1" fill="#cfcfcf"/><rect x="6" y="44" width="4" height="1" fill="#fff"/><rect x="11" y="44" width="19" height="1" fill="#fff"/><rect x="31" y="44" width="9" height="1" fill="#fff"/><rect x="41" y="44" width="9" height="1" fill="#fff"/><rect x="51" y="44" width="10" height="1" fill="#fff"/><rect x="62" y="44" width="9" height="1" fill="#fff"/><rect x="72" y="44" width="9" height="1" fill="#fff"/><rect x="82" y="44" width="10" height="1" fill="#fff"/><rect x="93" y="44" width="9" height="1" fill="#fff"/><rect x="6" y="44" width="3" height="1" fill="#cfcfcf"/><rect x="11" y="44" width="12" height="1" fill="#cfcfcf"/><rect x="6" y="46" width="4" height="1" fill="#fff"/><rect x="11" y="46" width="19" height="1" fill="#fff"/><rect x="31" y="46" width="9" height="1" fill="#fff"/><rect x="41" y="46" width="9" height="1" fill="#fff"/><rect x="51" y="46" width="10" height="1" fill="#fff"/><rect x="62" y="46" width="9" height="1" fill="#fff"/><rect x="72" y="46" width="9" height="1" fill="#fff"/><rect x="82" y="46" width="10" height="1" fill="#fff"/><rect x="93" y="46" width="9" height="1" fill="#fff"/><rect x="6" y="46" width="3" height="1" fill="#cfcfcf"/><rect x="11" y="46" width="9" height="1" fill="#cfcfcf"/><rect x="6" y="49" width="4" height="1" fill="#fff"/><rect x="11" y="49" width="19" height="1" fill="#fff"/><rect x="31" y="49" width="9" height="1" fill="#fff"/><rect x="41" y="49" width="9" height="1" fill="#fff"/><rect x="51" y="49" width="10" height="1" fill="#fff"/><rect x="62" y="49" width="9" height="1" fill="#fff"/><rect x="72" y="49" width="9" height="1" fill="#fff"/><rect x="82" y="49" width="10" height="1" fill="#fff"/><rect x="93" y="49" width="9" height="1" fill="#fff"/><rect x="6" y="49" width="3" height="1" fill="#cfcfcf"/><rect x="11" y="49" width="10" height="1" fill="#cfcfcf"/><rect x="6" y="52" width="4" height="1" fill="#fff"/><rect x="11" y="52" width="19" height="1" fill="#fff"/><rect x="31" y="52" width="9" height="1" fill="#fff"/><rect x="41" y="52" width="9" height="1" fill="#fff"/><rect x="51" y="52" width="10" height="1" fill="#fff"/><rect x="62" y="52" width="9" height="1" fill="#fff"/><rect x="72" y="52" width="9" height="1" fill="#fff"/><rect x="82" y="52" width="10" height="1" fill="#fff"/><rect x="93" y="52" width="9" height="1" fill="#fff"/><rect x="6" y="52" width="3" height="1" fill="#cfcfcf"/><rect x="11" y="52" width="11" height="1" fill="#cfcfcf"/><rect x="6" y="54" width="4" height="1" fill="#fff"/><rect x="11" y="54" width="19" height="1" fill="#fff"/><rect x="31" y="54" width="9" height="1" fill="#fff"/><rect x="41" y="54" width="9" height="1" fill="#fff"/><rect x="51" y="54" width="10" height="1" fill="#fff"/><rect x="62" y="54" width="9" height="1" fill="#fff"/><rect x="72" y="54" width="9" height="1" fill="#fff"/><rect x="82" y="54" width="10" height="1" fill="#fff"/><rect x="93" y="54" width="9" height="1" fill="#fff"/><rect x="6" y="54" width="3" height="1" fill="#cfcfcf"/><rect x="11" y="54" width="9" height="1" fill="#cfcfcf"/><rect x="6" y="57" width="4" height="1" fill="#fff"/><rect x="11" y="57" width="19" height="1" fill="#fff"/><rect x="31" y="57" width="9" height="1" fill="#fff"/><rect x="41" y="57" width="9" height="1" fill="#fff"/><rect x="51" y="57" width="10" height="1" fill="#fff"/><rect x="62" y="57" width="9" height="1" fill="#fff"/><rect x="72" y="57" width="9" height="1" fill="#fff"/><rect x="82" y="57" width="10" height="1" fill="#fff"/><rect x="93" y="57" width="9" height="1" fill="#fff"/><rect x="6" y="57" width="3" height="1" fill="#cfcfcf"/><rect x="11" y="57" width="12" height="1" fill="#cfcfcf"/><rect x="6" y="59" width="4" height="1" fill="#fff"/><rect x="11" y="59" width="19" height="1" fill="#fff"/><rect x="31" y="59" width="9" height="1" fill="#fff"/><rect x="41" y="59" width="9" height="1" fill="#fff"/><rect x="51" y="59" width="10" height="1" fill="#fff"/><rect x="62" y="59" width="9" height="1" fill="#fff"/><rect x="72" y="59" width="9" height="1" fill="#fff"/><rect x="82" y="59" width="10" height="1" fill="#fff"/><rect x="93" y="59" width="9" height="1" fill="#fff"/><rect x="6" y="59" width="3" height="1" fill="#cfcfcf"/><rect x="11" y="59" width="9" height="1" fill="#cfcfcf"/><rect x="6" y="62" width="4" height="1" fill="#fff"/><rect x="11" y="62" width="19" height="1" fill="#fff"/><rect x="31" y="62" width="9" height="1" fill="#fff"/><rect x="41" y="62" width="9" height="1" fill="#fff"/><rect x="51" y="62" width="10" height="1" fill="#fff"/><rect x="62" y="62" width="9" height="1" fill="#fff"/><rect x="72" y="62" width="9" height="1" fill="#fff"/><rect x="82" y="62" width="10" height="1" fill="#fff"/><rect x="93" y="62" width="9" height="1" fill="#fff"/><rect x="6" y="62" width="3" height="1" fill="#cfcfcf"/><rect x="11" y="62" width="10" height="1" fill="#cfcfcf"/><rect x="6" y="65" width="4" height="1" fill="#fff"/><rect x="11" y="65" width="19" height="1" fill="#fff"/><rect x="31" y="65" width="9" height="1" fill="#fff"/><rect x="41" y="65" width="9" height="1" fill="#fff"/><rect x="51" y="65" width="10" height="1" fill="#fff"/><rect x="62" y="65" width="9" height="1" fill="#fff"/><rect x="72" y="65" width="9" height="1" fill="#fff"/><rect x="82" y="65" width="10" height="1" fill="#fff"/><rect x="93" y="65" width="9" height="1" fill="#fff"/><rect x="6" y="65" width="3" height="1" fill="#cfcfcf"/><rect x="11" y="65" width="11" height="1" fill="#cfcfcf"/><rect x="6" y="67" width="4" height="1" fill="#fff"/><rect x="11" y="67" width="19" height="1" fill="#fff"/><rect x="31" y="67" width="9" height="1" fill="#fff"/><rect x="41" y="67" width="9" height="1" fill="#fff"/><rect x="51" y="67" width="10" height="1" fill="#fff"/><rect x="62" y="67" width="9" height="1" fill="#fff"/><rect x="72" y="67" width="9" height="1" fill="#fff"/><rect x="82" y="67" width="10" height="1" fill="#fff"/><rect x="93" y="67" width="9" height="1" fill="#fff"/><rect x="6" y="67" width="3" height="1" fill="#cfcfcf"/><rect x="11" y="67" width="10" height="1" fill="#cfcfcf"/><rect x="6" y="70" width="4" height="1" fill="#fff"/><rect x="11" y="70" width="19" height="1" fill="#fff"/><rect x="31" y="70" width="9" height="1" fill="#fff"/><rect x="41" y="70" width="9" height="1" fill="#fff"/><rect x="51" y="70" width="10" height="1" fill="#fff"/><rect x="62" y="70" width="9" height="1" fill="#fff"/><rect x="72" y="70" width="9" height="1" fill="#fff"/><rect x="82" y="70" width="10" height="1" fill="#fff"/><rect x="93" y="70" width="9" height="1" fill="#fff"/><rect x="6" y="70" width="3" height="1" fill="#cfcfcf"/><rect x="11" y="70" width="12" height="1" fill="#cfcfcf"/><rect x="6" y="72" width="4" height="1" fill="#fff"/><rect x="11" y="72" width="19" height="1" fill="#fff"/><rect x="31" y="72" width="9" height="1" fill="#fff"/><rect x="41" y="72" width="9" height="1" fill="#fff"/><rect x="51" y="72" width="10" height="1" fill="#fff"/><rect x="62" y="72" width="9" height="1" fill="#fff"/><rect x="72" y="72" width="9" height="1" fill="#fff"/><rect x="82" y="72" width="10" height="1" fill="#fff"/><rect x="93" y="72" width="9" height="1" fill="#fff"/><rect x="6" y="72" width="3" height="1" fill="#cfcfcf"/><rect x="11" y="72" width="9" height="1" fill="#cfcfcf"/><rect x="6" y="75" width="4" height="1" fill="#fff"/><rect x="11" y="75" width="19" height="1" fill="#fff"/><rect x="31" y="75" width="9" height="1" fill="#fff"/><rect x="41" y="75" width="9" height="1" fill="#fff"/><rect x="51" y="75" width="10" height="1" fill="#fff"/><rect x="62" y="75" width="9" height="1" fill="#fff"/><rect x="72" y="75" width="9" height="1" fill="#fff"/><rect x="82" y="75" width="10" height="1" fill="#fff"/><rect x="93" y="75" width="9" height="1" fill="#fff"/><rect x="6" y="75" width="3" height="1" fill="#cfcfcf"/><rect x="11" y="75" width="10" height="1" fill="#cfcfcf"/><rect x="6" y="78" width="4" height="1" fill="#fff"/><rect x="11" y="78" width="19" height="1" fill="#fff"/><rect x="31" y="78" width="9" height="1" fill="#fff"/><rect x="41" y="78" width="9" height="1" fill="#fff"/><rect x="51" y="78" width="10" height="1" fill="#fff"/><rect x="62" y="78" width="9" height="1" fill="#fff"/><rect x="72" y="78" width="9" height="1" fill="#fff"/><rect x="82" y="78" width="10" height="1" fill="#fff"/><rect x="93" y="78" width="9" height="1" fill="#fff"/><rect x="6" y="78" width="3" height="1" fill="#cfcfcf"/><rect x="11" y="78" width="11" height="1" fill="#cfcfcf"/><rect x="6" y="80" width="4" height="1" fill="#fff"/><rect x="11" y="80" width="19" height="1" fill="#fff"/><rect x="31" y="80" width="9" height="1" fill="#fff"/><rect x="41" y="80" width="9" height="1" fill="#fff"/><rect x="51" y="80" width="10" height="1" fill="#fff"/><rect x="62" y="80" width="9" height="1" fill="#fff"/><rect x="72" y="80" width="9" height="1" fill="#fff"/><rect x="82" y="80" width="10" height="1" fill="#fff"/><rect x="93" y="80" width="9" height="1" fill="#fff"/><rect x="6" y="80" width="3" height="1" fill="#cfcfcf"/><rect x="11" y="80" width="9" height="1" fill="#cfcfcf"/><rect x="6" y="83" width="4" height="1" fill="#fff"/><rect x="11" y="83" width="19" height="1" fill="#fff"/><rect x="31" y="83" width="9" height="1" fill="#fff"/><rect x="41" y="83" width="9" height="1" fill="#fff"/><rect x="51" y="83" width="10" height="1" fill="#fff"/><rect x="62" y="83" width="9" height="1" fill="#fff"/><rect x="72" y="83" width="9" height="1" fill="#fff"/><rect x="82" y="83" width="10" height="1" fill="#fff"/><rect x="93" y="83" width="9" height="1" fill="#fff"/><rect x="6" y="83" width="3" height="1" fill="#cfcfcf"/><rect x="11" y="83" width="12" height="1" fill="#cfcfcf"/><rect x="6" y="85" width="4" height="1" fill="#fff"/><rect x="11" y="85" width="19" height="1" fill="#fff"/><rect x="31" y="85" width="9" height="1" fill="#fff"/><rect x="41" y="85" width="9" height="1" fill="#fff"/><rect x="51" y="85" width="10" height="1" fill="#fff"/><rect x="62" y="85" width="9" height="1" fill="#fff"/><rect x="72" y="85" width="9" height="1" fill="#fff"/><rect x="82" y="85" width="10" height="1" fill="#fff"/><rect x="93" y="85" width="9" height="1" fill="#fff"/><rect x="6" y="85" width="3" height="1" fill="#cfcfcf"/><rect x="11" y="85" width="9" height="1" fill="#cfcfcf"/><rect x="6" y="88" width="4" height="1" fill="#fff"/><rect x="11" y="88" width="19" height="1" fill="#fff"/><rect x="31" y="88" width="9" height="1" fill="#fff"/><rect x="41" y="88" width="9" height="1" fill="#fff"/><rect x="51" y="88" width="10" height="1" fill="#fff"/><rect x="62" y="88" width="9" height="1" fill="#fff"/><rect x="72" y="88" width="9" height="1" fill="#fff"/><rect x="82" y="88" width="10" height="1" fill="#fff"/><rect x="93" y="88" width="9" height="1" fill="#fff"/><rect x="6" y="88" width="3" height="1" fill="#cfcfcf"/><rect x="11" y="88" width="10" height="1" fill="#cfcfcf"/><rect x="6" y="91" width="4" height="1" fill="#fff"/><rect x="11" y="91" width="19" height="1" fill="#fff"/><rect x="31" y="91" width="9" height="1" fill="#fff"/><rect x="41" y="91" width="9" height="1" fill="#fff"/><rect x="51" y="91" width="10" height="1" fill="#fff"/><rect x="62" y="91" width="9" height="1" fill="#fff"/><rect x="72" y="91" width="9" height="1" fill="#fff"/><rect x="82" y="91" width="10" height="1" fill="#fff"/><rect x="93" y="91" width="9" height="1" fill="#fff"/><rect x="6" y="91" width="3" height="1" fill="#cfcfcf"/><rect x="11" y="91" width="11" height="1" fill="#cfcfcf"/><rect x="6" y="93" width="4" height="1" fill="#fff"/><rect x="11" y="93" width="19" height="1" fill="#fff"/><rect x="31" y="93" width="9" height="1" fill="#fff"/><rect x="41" y="93" width="9" height="1" fill="#fff"/><rect x="51" y="93" width="10" height="1" fill="#fff"/><rect x="62" y="93" width="9" height="1" fill="#fff"/><rect x="72" y="93" width="9" height="1" fill="#fff"/><rect x="82" y="93" width="10" height="1" fill="#fff"/><rect x="93" y="93" width="9" height="1" fill="#fff"/><rect x="6" y="93" width="3" height="1" fill="#cfcfcf"/><rect x="11" y="93" width="10" height="1" fill="#cfcfcf"/><rect x="6" y="96" width="4" height="1" fill="#fff"/><rect x="11" y="96" width="19" height="1" fill="#fff"/><rect x="31" y="96" width="9" height="1" fill="#fff"/><rect x="41" y="96" width="9" height="1" fill="#fff"/><rect x="51" y="96" width="10" height="1" fill="#fff"/><rect x="62" y="96" width="9" height="1" fill="#fff"/><rect x="72" y="96" width="9" height="1" fill="#fff"/><rect x="82" y="96" width="10" height="1" fill="#fff"/><rect x="93" y="96" width="9" height="1" fill="#fff"/><rect x="6" y="96" width="3" height="1" fill="#cfcfcf"/><rect x="11" y="96" width="12" height="1" fill="#cfcfcf"/><rect x="6" y="98" width="4" height="1" fill="#fff"/><rect x="11" y="98" width="19" height="1" fill="#fff"/><rect x="31" y="98" width="9" height="1" fill="#fff"/><rect x="41" y="98" width="9" height="1" fill="#fff"/><rect x="51" y="98" width="10" height="1" fill="#fff"/><rect x="62" y="98" width="9" height="1" fill="#fff"/><rect x="72" y="98" width="9" height="1" fill="#fff"/><rect x="82" y="98" width="10" height="1" fill="#fff"/><rect x="93" y="98" width="9" height="1" fill="#fff"/><rect x="6" y="98" width="3" height="1" fill="#cfcfcf"/><rect x="11" y="98" width="9" height="1" fill="#cfcfcf"/><rect x="6" y="101" width="4" height="1" fill="#fff"/><rect x="11" y="101" width="19" height="1" fill="#fff"/><rect x="31" y="101" width="9" height="1" fill="#fff"/><rect x="41" y="101" width="9" height="1" fill="#fff"/><rect x="51" y="101" width="10" height="1" fill="#fff"/><rect x="62" y="101" width="9" height="1" fill="#fff"/><rect x="72" y="101" width="9" height="1" fill="#fff"/><rect x="82" y="101" width="10" height="1" fill="#fff"/><rect x="93" y="101" width="9" height="1" fill="#fff"/><rect x="6" y="101" width="3" height="1" fill="#cfcfcf"/><rect x="11" y="101" width="10" height="1" fill="#cfcfcf"/><rect x="6" y="104" width="4" height="1" fill="#fff"/><rect x="11" y="104" width="19" height="1" fill="#fff"/><rect x="31" y="104" width="9" height="1" fill="#fff"/><rect x="41" y="104" width="9" height="1" fill="#fff"/><rect x="51" y="104" width="10" height="1" fill="#fff"/><rect x="62" y="104" width="9" height="1" fill="#fff"/><rect x="72" y="104" width="9" height="1" fill="#fff"/><rect x="82" y="104" width="10" height="1" fill="#fff"/><rect x="93" y="104" width="9" height="1" fill="#fff"/><rect x="6" y="104" width="3" height="1" fill="#cfcfcf"/><rect x="11" y="104" width="11" height="1" fill="#cfcfcf"/><rect x="6" y="106" width="4" height="1" fill="#fff"/><rect x="11" y="106" width="19" height="1" fill="#fff"/><rect x="31" y="106" width="9" height="1" fill="#fff"/><rect x="41" y="106" width="9" height="1" fill="#fff"/><rect x="51" y="106" width="10" height="1" fill="#fff"/><rect x="62" y="106" width="9" height="1" fill="#fff"/><rect x="72" y="106" width="9" height="1" fill="#fff"/><rect x="82" y="106" width="10" height="1" fill="#fff"/><rect x="93" y="106" width="9" height="1" fill="#fff"/><rect x="6" y="106" width="3" height="1" fill="#cfcfcf"/><rect x="11" y="106" width="9" height="1" fill="#cfcfcf"/><rect x="6" y="109" width="4" height="1" fill="#fff"/><rect x="11" y="109" width="19" height="1" fill="#fff"/><rect x="31" y="109" width="9" height="1" fill="#fff"/><rect x="41" y="109" width="9" height="1" fill="#fff"/><rect x="51" y="109" width="10" height="1" fill="#fff"/><rect x="62" y="109" width="9" height="1" fill="#fff"/><rect x="72" y="109" width="9" height="1" fill="#fff"/><rect x="82" y="109" width="10" height="1" fill="#fff"/><rect x="93" y="109" width="9" height="1" fill="#fff"/><rect x="6" y="109" width="3" height="1" fill="#cfcfcf"/><rect x="11" y="109" width="12" height="1" fill="#cfcfcf"/><rect x="6" y="111" width="4" height="1" fill="#fff"/><rect x="11" y="111" width="19" height="1" fill="#fff"/><rect x="31" y="111" width="9" height="1" fill="#fff"/><rect x="41" y="111" width="9" height="1" fill="#fff"/><rect x="51" y="111" width="10" height="1" fill="#fff"/><rect x="62" y="111" width="9" height="1" fill="#fff"/><rect x="72" y="111" width="9" height="1" fill="#fff"/><rect x="82" y="111" width="10" height="1" fill="#fff"/><rect x="93" y="111" width="9" height="1" fill="#fff"/><rect x="6" y="111" width="3" height="1" fill="#cfcfcf"/><rect x="11" y="111" width="9" height="1" fill="#cfcfcf"/><rect x="6" y="114" width="4" height="1" fill="#fff"/><rect x="11" y="114" width="19" height="1" fill="#fff"/><rect x="31" y="114" width="9" height="1" fill="#fff"/><rect x="41" y="114" width="9" height="1" fill="#fff"/><rect x="51" y="114" width="10" height="1" fill="#fff"/><rect x="62" y="114" width="9" height="1" fill="#fff"/><rect x="72" y="114" width="9" height="1" fill="#fff"/><rect x="82" y="114" width="10" height="1" fill="#fff"/><rect x="93" y="114" width="9" height="1" fill="#fff"/><rect x="6" y="114" width="3" height="1" fill="#cfcfcf"/><rect x="11" y="114" width="10" height="1" fill="#cfcfcf"/><rect x="6" y="117" width="4" height="1" fill="#fff"/><rect x="11" y="117" width="19" height="1" fill="#fff"/><rect x="31" y="117" width="9" height="1" fill="#fff"/><rect x="41" y="117" width="9" height="1" fill="#fff"/><rect x="51" y="117" width="10" height="1" fill="#fff"/><rect x="62" y="117" width="9" height="1" fill="#fff"/><rect x="72" y="117" width="9" height="1" fill="#fff"/><rect x="82" y="117" width="10" height="1" fill="#fff"/><rect x="93" y="117" width="9" height="1" fill="#fff"/><rect x="6" y="117" width="3" height="1" fill="#cfcfcf"/><rect x="11" y="117" width="11" height="1" fill="#cfcfcf"/><rect x="6" y="119" width="4" height="1" fill="#fff"/><rect x="11" y="119" width="19" height="1" fill="#fff"/><rect x="31" y="119" width="9" height="1" fill="#fff"/><rect x="41" y="119" width="9" height="1" fill="#fff"/><rect x="51" y="119" width="10" height="1" fill="#fff"/><rect x="62" y="119" width="9" height="1" fill="#fff"/><rect x="72" y="119" width="9" height="1" fill="#fff"/><rect x="82" y="119" width="10" height="1" fill="#fff"/><rect x="93" y="119" width="9" height="1" fill="#fff"/><rect x="6" y="119" width="3" height="1" fill="#cfcfcf"/><rect x="11" y="119" width="10" height="1" fill="#cfcfcf"/><rect x="6" y="122" width="4" height="1" fill="#fff"/><rect x="11" y="122" width="19" height="1" fill="#fff"/><rect x="31" y="122" width="9" height="1" fill="#fff"/><rect x="41" y="122" width="9" height="1" fill="#fff"/><rect x="51" y="122" width="10" height="1" fill="#fff"/><rect x="62" y="122" width="9" height="1" fill="#fff"/><rect x="72" y="122" width="9" height="1" fill="#fff"/><rect x="82" y="122" width="10" height="1" fill="#fff"/><rect x="93" y="122" width="9" height="1" fill="#fff"/><rect x="6" y="122" width="3" height="1" fill="#cfcfcf"/><rect x="11" y="122" width="12" height="1" fill="#cfcfcf"/><rect x="6" y="124" width="4" height="1" fill="#fff"/><rect x="11" y="124" width="19" height="1" fill="#fff"/><rect x="31" y="124" width="9" height="1" fill="#fff"/><rect x="41" y="124" width="9" height="1" fill="#fff"/><rect x="51" y="124" width="10" height="1" fill="#fff"/><rect x="62" y="124" width="9" height="1" fill="#fff"/><rect x="72" y="124" width="9" height="1" fill="#fff"/><rect x="82" y="124" width="10" height="1" fill="#fff"/><rect x="93" y="124" width="9" height="1" fill="#fff"/><rect x="6" y="124" width="3" height="1" fill="#cfcfcf"/><rect x="11" y="124" width="9" height="1" fill="#cfcfcf"/><rect x="6" y="127" width="4" height="1" fill="#fff"/><rect x="11" y="127" width="19" height="1" fill="#fff"/><rect x="31" y="127" width="9" height="1" fill="#fff"/><rect x="41" y="127" width="9" height="1" fill="#fff"/><rect x="51" y="127" width="10" height="1" fill="#fff"/><rect x="62" y="127" width="9" height="1" fill="#fff"/><rect x="72" y="127" width="9" height="1" fill="#fff"/><rect x="82" y="127" width="10" height="1" fill="#fff"/><rect x="93" y="127" width="9" height="1" fill="#fff"/><rect x="6" y="127" width="3" height="1" fill="#cfcfcf"/><rect x="11" y="127" width="10" height="1" fill="#cfcfcf"/><rect x="6" y="130" width="4" height="1" fill="#fff"/><rect x="11" y="130" width="19" height="1" fill="#fff"/><rect x="31" y="130" width="9" height="1" fill="#fff"/><rect x="41" y="130" width="9" height="1" fill="#fff"/><rect x="51" y="130" width="10" height="1" fill="#fff"/><rect x="62" y="130" width="9" height="1" fill="#fff"/><rect x="72" y="130" width="9" height="1" fill="#fff"/><rect x="82" y="130" width="10" height="1" fill="#fff"/><rect x="93" y="130" width="9" height="1" fill="#fff"/><rect x="6" y="130" width="3" height="1" fill="#cfcfcf"/><rect x="11" y="130" width="11" height="1" fill="#cfcfcf"/><rect x="6" y="132" width="4" height="1" fill="#fff"/><rect x="11" y="132" width="19" height="1" fill="#fff"/><rect x="31" y="132" width="9" height="1" fill="#fff"/><rect x="41" y="132" width="9" height="1" fill="#fff"/><rect x="51" y="132" width="10" height="1" fill="#fff"/><rect x="62" y="132" width="9" height="1" fill="#fff"/><rect x="72" y="132" width="9" height="1" fill="#fff"/><rect x="82" y="132" width="10" height="1" fill="#fff"/><rect x="93" y="132" width="9" height="1" fill="#fff"/><rect x="6" y="132" width="3" height="1" fill="#cfcfcf"/><rect x="11" y="132" width="9" height="1" fill="#cfcfcf"/><rect x="6" y="135" width="4" height="1" fill="#fff"/><rect x="11" y="135" width="19" height="1" fill="#fff"/><rect x="31" y="135" width="9" height="1" fill="#fff"/><rect x="41" y="135" width="9" height="1" fill="#fff"/><rect x="51" y="135" width="10" height="1" fill="#fff"/><rect x="62" y="135" width="9" height="1" fill="#fff"/><rect x="72" y="135" width="9" height="1" fill="#fff"/><rect x="82" y="135" width="10" height="1" fill="#fff"/><rect x="93" y="135" width="9" height="1" fill="#fff"/><rect x="6" y="135" width="3" height="1" fill="#cfcfcf"/><rect x="11" y="135" width="12" height="1" fill="#cfcfcf"/><rect x="6" y="137" width="24" height="4" fill="#fff"/><rect x="31" y="137" width="9" height="4" fill="#fff"/><rect x="41" y="137" width="9" height="4" fill="#fff"/><rect x="51" y="137" width="10" height="4" fill="#fff"/><rect x="62" y="137" width="9" height="4" fill="#fff"/><rect x="72" y="137" width="9" height="4" fill="#fff"/><rect x="82" y="137" width="10" height="4" fill="#fff"/><rect x="93" y="137" width="9" height="4" fill="#fff"/><rect x="8" y="139" width="9" height="1" fill="#cfcfcf"/><rect x="100" y="145" width="1" height="1" fill="#bbb"/></svg>
<svg class="a" style="left:90px;top:530px" width="107" height="152" viewBox="0 0 107 152" shape-rendering="crispEdges"><rect width="107" height="152" fill="#fff"/><rect x="29" y="6" width="48" height="2" fill="#b8b8b8"/><rect x="48" y="10" width="10" height="1" fill="#b8b8b8"/><rect x="44" y="14" width="20" height="2" fill="#b8b8b8"/><rect x="5" y="16" width="98" height="126" fill="#8a8a8a"/><rect x="6" y="17" width="4" height="4" fill="#d9d9d9"/><rect x="11" y="17" width="19" height="4" fill="#d9d9d9"/><rect x="31" y="17" width="9" height="4" fill="#d9d9d9"/><rect x="41" y="17" width="9" height="4" fill="#d9d9d9"/><rect x="51" y="17" width="10" height="4" fill="#d9d9d9"/><rect x="62" y="17" width="9" height="4" fill="#d9d9d9"/><rect x="72" y="17" width="9" height="4" fill="#d9d9d9"/><rect x="82" y="17" width="10" height="4" fill="#d9d9d9"/><rect x="93" y="17" width="9" height="4" fill="#d9d9d9"/><rect x="17" y="18" width="6" height="1" fill="#888"/><rect x="6" y="23" width="4" height="1" fill="#fff"/><rect x="11" y="23" width="19" height="1" fill="#fff"/><rect x="31" y="23" width="9" height="1" fill="#fff"/><rect x="41" y="23" width="9" height="1" fill="#fff"/><rect x="51" y="23" width="10" height="1" fill="#fff"/><rect x="62" y="23" width="9" height="1" fill="#fff"/><rect x="72" y="23" width="9" height="1" fill="#fff"/><rect x="82" y="23" width="10" height="1" fill="#fff"/><rect x="93" y="23" width="9" height="1" fill="#fff"/><rect x="6" y="23" width="3" height="1" fill="#cfcfcf"/><rect x="11" y="23" width="10" height="1" fill="#cfcfcf"/><rect x="6" y="26" width="4" height="1" fill="#fff"/><rect x="11" y="26" width="19" height="1" fill="#fff"/><rect x="31" y="26" width="9" height="1" fill="#fff"/><rect x="41" y="26" width="9" height="1" fill="#fff"/><rect x="51" y="26" width="10" height="1" fill="#fff"/><rect x="62" y="26" width="9" height="1" fill="#fff"/><rect x="72" y="26" width="9" height="1" fill="#fff"/><rect x="82" y="26" width="10" height="1" fill="#fff"/><rect x="93" y="26" width="9" height="1" fill="#fff"/><rect x="6" y="26" width="3" height="1" fill="#cfcfcf"/><rect x="11" y="26" width="11" height="1" fill="#cfcfcf"/><rect x="6" y="28" width="4" height="1" fill="#fff"/><rect x="11" y="28" width="19" height="1" fill="#fff"/><rect x="31" y="28" width="9" height="1" fill="#fff"/><rect x="41" y="28" width="9" height="1" fill="#fff"/><rect x="51" y="28" width="10" height="1" fill="#fff"/><rect x="62" y="28" width="9" height="1" fill="#fff"/><rect x="72" y="28" width="9" height="1" fill="#fff"/><rect x="82" y="28" width="10" height="1" fill="#fff"/><rect x="93" y="28" width="9" height="1" fill="#fff"/><rect x="6" y="28" width="3" height="1" fill="#cfcfcf"/><rect x="11" y="28" width="9" height="1" fill="#cfcfcf"/><rect x="6" y="31" width="4" height="1" fill="#fff"/><rect x="11" y="31" width="19" height="1" fill="#fff"/><rect x="31" y="31" width="9" height="1" fill="#fff"/><rect x="41" y="31" width="9" height="1" fill="#fff"/><rect x="51" y="31" width="10" height="1" fill="#fff"/><rect x="62" y="31" width="9" height="1" fill="#fff"/><rect x="72" y="31" width="9" height="1" fill="#fff"/><rect x="82" y="31" width="10" height="1" fill="#fff"/><rect x="93" y="31" width="9" height="1" fill="#fff"/><rect x="6" y="31" width="3" height="1" fill="#cfcfcf"/><rect x="11" y="31" width="12" height="1" fill="#cfcfcf"/><rect x="6" y="33" width="4" height="1" fill="#fff"/><rect x="11" y="33" width="19" height="1" fill="#fff"/><rect x="31" y="33" width="9" height="1" fill="#fff"/><rect x="41" y="33" width="9" height="1" fill="#fff"/><rect x="51" y="33" width="10" height="1" fill="#fff"/><rect x="62" y="33" width="9" height="1" fill="#fff"/><rect x="72" y="33" width="9" height="1" fill="#fff"/><rect x="82" y="33" width="10" height="1" fill="#fff"/><rect x="93" y="33" width="9" height="1" fill="#fff"/><rect x="6" y="33" width="3" height="1" fill="#cfcfcf"/><rect x="11" y="33" width="9" height="1" fill="#cfcfcf"/><rect x="6" y="36" width="4" height="1" fill="#fff"/><rect x="11" y="36" width="19" height="1" fill="#fff"/><rect x="31" y="36" width="9" height="1" fill="#fff"/><rect x="41" y="36" width="9" height="1" fill="#fff"/><rect x="51" y="36" width="10" height="1" fill="#fff"/><rect x="62" y="36" width="9" height="1" fill="#fff"/><rect x="72" y="36" width="9" height="1" fill="#fff"/><rect x="82" y="36" width="10" height="1" fill="#fff"/><rect x="93" y="36" width="9" height="1" fill="#fff"/><rect x="6" y="36" width="3" height="1" fill="#cfcfcf"/><rect x="11" y="36" width="10" height="1" fill="#cfcfcf"/><rect x="6" y="39" width="4" height="1" fill="#fff"/><rect x="11" y="39" width="19" height="1" fill="#fff"/><rect x="31" y="39" width="9" height="1" fill="#fff"/><rect x="41" y="39" width="9" height="1" fill="#fff"/><rect x="51" y="39" width="10" height="1" fill="#fff"/><rect x="62" y="39" width="9" height="1" fill="#fff"/><rect x="72" y="39" width="9" height="1" fill="#fff"/><rect x="82" y="39" width="10" height="1" fill="#fff"/><rect x="93" y="39" width="9" height="1" fill="#fff"/><rect x="6" y="39" width="3" height="1" fill="#cfcfcf"/><rect x="11" y="39" width="11" height="1" fill="#cfcfcf"/><rect x="6" y="41" width="4" height="1" fill="#fff"/><rect x="11" y="41" width="19" height="1" fill="#fff"/><rect x="31" y="41" width="9" height="1" fill="#fff"/><rect x="41" y="41" width="9" height="1" fill="#fff"/><rect x="51" y="41" width="10" height="1" fill="#fff"/><rect x="62" y="41" width="9" height="1" fill="#fff"/><rect x="72" y="41" width="9" height="1" fill="#fff"/><rect x="82" y="41" width="10" height="1" fill="#fff"/><rect x="93" y="41" width="9" height="1" fill="#fff"/><rect x="6" y="41" width="3" height="1" fill="#cfcfcf"/><rect x="11" y="41" width="10" height="1" fill="#cfcfcf"/><rect x="6" y="44" width="4" height="1" fill="#fff"/><rect x="11" y="44" width="19" height="1" fill="#fff"/><rect x="31" y="44" width="9" height="1" fill="#fff"/><rect x="41" y="44" width="9" height="1" fill="#fff"/><rect x="51" y="44" width="10" height="1" fill="#fff"/><rect x="62" y="44" width="9" height="1" fill="#fff"/><rect x="72" y="44" width="9" height="1" fill="#fff"/><rect x="82" y="44" width="10" height="1" fill="#fff"/><rect x="93" y="44" width="9" height="1" fill="#fff"/><rect x="6" y="44" width="3" height="1" fill="#cfcfcf"/><rect x="11" y="44" width="12" height="1" fill="#cfcfcf"/><rect x="6" y="46" width="4" height="1" fill="#fff"/><rect x="11" y="46" width="19" height="1" fill="#fff"/><rect x="31" y="46" width="9" height="1" fill="#fff"/><rect x="41" y="46" width="9" height="1" fill="#fff"/><rect x="51" y="46" width="10" height="1" fill="#fff"/><rect x="62" y="46" width="9" height="1" fill="#fff"/><rect x="72" y="46" width="9" height="1" fill="#fff"/><rect x="82" y="46" width="10" height="1" fill="#fff"/><rect x="93" y="46" width="9" height="1" fill="#fff"/><rect x="6" y="46" width="3" height="1" fill="#cfcfcf"/><rect x="11" y="46" width="9" height="1" fill="#cfcfcf"/><rect x="6" y="49" width="4" height="1" fill="#fff"/><rect x="11" y="49" width="19" height="1" fill="#fff"/><rect x="31" y="49" width="9" height="1" fill="#fff"/><rect x="41" y="49" width="9" height="1" fill="#fff"/><rect x="51" y="49" width="10" height="1" fill="#fff"/><rect x="62" y="49" width="9" height="1" fill="#fff"/><rect x="72" y="49" width="9" height="1" fill="#fff"/><rect x="82" y="49" width="10" height="1" fill="#fff"/><rect x="93" y="49" width="9" height="1" fill="#fff"/><rect x="6" y="49" width="3" height="1" fill="#cfcfcf"/><rect x="11" y="49" width="10" height="1" fill="#cfcfcf"/><rect x="6" y="52" width="4" height="1" fill="#fff"/><rect x="11" y="52" width="19" height="1" fill="#fff"/><rect x="31" y="52" width="9" height="1" fill="#fff"/><rect x="41" y="52" width="9" height="1" fill="#fff"/><rect x="51" y="52" width="10" height="1" fill="#fff"/><rect x="62" y="52" width="9" height="1" fill="#fff"/><rect x="72" y="52" width="9" height="1" fill="#fff"/><rect x="82" y="52" width="10" height="1" fill="#fff"/><rect x="93" y="52" width="9" height="1" fill="#fff"/><rect x="6" y="52" width="3" height="1" fill="#cfcfcf"/><rect x="11" y="52" width="11" height="1" fill="#cfcfcf"/><rect x="6" y="54" width="4" height="1" fill="#fff"/><rect x="11" y="54" width="19" height="1" fill="#fff"/><rect x="31" y="54" width="9" height="1" fill="#fff"/><rect x="41" y="54" width="9" height="1" fill="#fff"/><rect x="51" y="54" width="10" height="1" fill="#fff"/><rect x="62" y="54" width="9" height="1" fill="#fff"/><rect x="72" y="54" width="9" height="1" fill="#fff"/><rect x="82" y="54" width="10" height="1" fill="#fff"/><rect x="93" y="54" width="9" height="1" fill="#fff"/><rect x="6" y="54" width="3" height="1" fill="#cfcfcf"/><rect x="11" y="54" width="9" height="1" fill="#cfcfcf"/><rect x="6" y="57" width="4" height="1" fill="#fff"/><rect x="11" y="57" width="19" height="1" fill="#fff"/><rect x="31" y="57" width="9" height="1" fill="#fff"/><rect x="41" y="57" width="9" height="1" fill="#fff"/><rect x="51" y="57" width="10" height="1" fill="#fff"/><rect x="62" y="57" width="9" height="1" fill="#fff"/><rect x="72" y="57" width="9" height="1" fill="#fff"/><rect x="82" y="57" width="10" height="1" fill="#fff"/><rect x="93" y="57" width="9" height="1" fill="#fff"/><rect x="6" y="57" width="3" height="1" fill="#cfcfcf"/><rect x="11" y="57" width="12" height="1" fill="#cfcfcf"/><rect x="6" y="59" width="4" height="1" fill="#fff"/><rect x="11" y="59" width="19" height="1" fill="#fff"/><rect x="31" y="59" width="9" height="1" fill="#fff"/><rect x="41" y="59" width="9" height="1" fill="#fff"/><rect x="51" y="59" width="10" height="1" fill="#fff"/><rect x="62" y="59" width="9" height="1" fill="#fff"/><rect x="72" y="59" width="9" height="1" fill="#fff"/><rect x="82" y="59" width="10" height="1" fill="#fff"/><rect x="93" y="59" width="9" height="1" fill="#fff"/><rect x="6" y="59" width="3" height="1" fill="#cfcfcf"/><rect x="11" y="59" width="9" height="1" fill="#cfcfcf"/><rect x="6" y="62" width="4" height="1" fill="#fff"/><rect x="11" y="62" width="19" height="1" fill="#fff"/><rect x="31" y="62" width="9" height="1" fill="#fff"/><rect x="41" y="62" width="9" height="1" fill="#fff"/><rect x="51" y="62" width="10" height="1" fill="#fff"/><rect x="62" y="62" width="9" height="1" fill="#fff"/><rect x="72" y="62" width="9" height="1" fill="#fff"/><rect x="82" y="62" width="10" height="1" fill="#fff"/><rect x="93" y="62" width="9" height="1" fill="#fff"/><rect x="6" y="62" width="3" height="1" fill="#cfcfcf"/><rect x="11" y="62" width="10" height="1" fill="#cfcfcf"/><rect x="6" y="65" width="4" height="1" fill="#fff"/><rect x="11" y="65" width="19" height="1" fill="#fff"/><rect x="31" y="65" width="9" height="1" fill="#fff"/><rect x="41" y="65" width="9" height="1" fill="#fff"/><rect x="51" y="65" width="10" height="1" fill="#fff"/><rect x="62" y="65" width="9" height="1" fill="#fff"/><rect x="72" y="65" width="9" height="1" fill="#fff"/><rect x="82" y="65" width="10" height="1" fill="#fff"/><rect x="93" y="65" width="9" height="1" fill="#fff"/><rect x="6" y="65" width="3" height="1" fill="#cfcfcf"/><rect x="11" y="65" width="11" height="1" fill="#cfcfcf"/><rect x="6" y="67" width="4" height="1" fill="#fff"/><rect x="11" y="67" width="19" height="1" fill="#fff"/><rect x="31" y="67" width="9" height="1" fill="#fff"/><rect x="41" y="67" width="9" height="1" fill="#fff"/><rect x="51" y="67" width="10" height="1" fill="#fff"/><rect x="62" y="67" width="9" height="1" fill="#fff"/><rect x="72" y="67" width="9" height="1" fill="#fff"/><rect x="82" y="67" width="10" height="1" fill="#fff"/><rect x="93" y="67" width="9" height="1" fill="#fff"/><rect x="6" y="67" width="3" height="1" fill="#cfcfcf"/><rect x="11" y="67" width="10" height="1" fill="#cfcfcf"/><rect x="6" y="70" width="4" height="1" fill="#fff"/><rect x="11" y="70" width="19" height="1" fill="#fff"/><rect x="31" y="70" width="9" height="1" fill="#fff"/><rect x="41" y="70" width="9" height="1" fill="#fff"/><rect x="51" y="70" width="10" height="1" fill="#fff"/><rect x="62" y="70" width="9" height="1" fill="#fff"/><rect x="72" y="70" width="9" height="1" fill="#fff"/><rect x="82" y="70" width="10" height="1" fill="#fff"/><rect x="93" y="70" width="9" height="1" fill="#fff"/><rect x="6" y="70" width="3" height="1" fill="#cfcfcf"/><rect x="11" y="70" width="12" height="1" fill="#cfcfcf"/><rect x="6" y="72" width="4" height="1" fill="#fff"/><rect x="11" y="72" width="19" height="1" fill="#fff"/><rect x="31" y="72" width="9" height="1" fill="#fff"/><rect x="41" y="72" width="9" height="1" fill="#fff"/><rect x="51" y="72" width="10" height="1" fill="#fff"/><rect x="62" y="72" width="9" height="1" fill="#fff"/><rect x="72" y="72" width="9" height="1" fill="#fff"/><rect x="82" y="72" width="10" height="1" fill="#fff"/><rect x="93" y="72" width="9" height="1" fill="#fff"/><rect x="6" y="72" width="3" height="1" fill="#cfcfcf"/><rect x="11" y="72" width="9" height="1" fill="#cfcfcf"/><rect x="6" y="75" width="4" height="1" fill="#fff"/><rect x="11" y="75" width="19" height="1" fill="#fff"/><rect x="31" y="75" width="9" height="1" fill="#fff"/><rect x="41" y="75" width="9" height="1" fill="#fff"/><rect x="51" y="75" width="10" height="1" fill="#fff"/><rect x="62" y="75" width="9" height="1" fill="#fff"/><rect x="72" y="75" width="9" height="1" fill="#fff"/><rect x="82" y="75" width="10" height="1" fill="#fff"/><rect x="93" y="75" width="9" height="1" fill="#fff"/><rect x="6" y="75" width="3" height="1" fill="#cfcfcf"/><rect x="11" y="75" width="10" height="1" fill="#cfcfcf"/><rect x="6" y="78" width="4" height="1" fill="#fff"/><rect x="11" y="78" width="19" height="1" fill="#fff"/><rect x="31" y="78" width="9" height="1" fill="#fff"/><rect x="41" y="78" width="9" height="1" fill="#fff"/><rect x="51" y="78" width="10" height="1" fill="#fff"/><rect x="62" y="78" width="9" height="1" fill="#fff"/><rect x="72" y="78" width="9" height="1" fill="#fff"/><rect x="82" y="78" width="10" height="1" fill="#fff"/><rect x="93" y="78" width="9" height="1" fill="#fff"/><rect x="6" y="78" width="3" height="1" fill="#cfcfcf"/><rect x="11" y="78" width="11" height="1" fill="#cfcfcf"/><rect x="6" y="80" width="4" height="1" fill="#fff"/><rect x="11" y="80" width="19" height="1" fill="#fff"/><rect x="31" y="80" width="9" height="1" fill="#fff"/><rect x="41" y="80" width="9" height="1" fill="#fff"/><rect x="51" y="80" width="10" height="1" fill="#fff"/><rect x="62" y="80" width="9" height="1" fill="#fff"/><rect x="72" y="80" width="9" height="1" fill="#fff"/><rect x="82" y="80" width="10" height="1" fill="#fff"/><rect x="93" y="80" width="9" height="1" fill="#fff"/><rect x="6" y="80" width="3" height="1" fill="#cfcfcf"/><rect x="11" y="80" width="9" height="1" fill="#cfcfcf"/><rect x="6" y="83" width="4" height="1" fill="#fff"/><rect x="11" y="83" width="19" height="1" fill="#fff"/><rect x="31" y="83" width="9" height="1" fill="#fff"/><rect x="41" y="83" width="9" height="1" fill="#fff"/><rect x="51" y="83" width="10" height="1" fill="#fff"/><rect x="62" y="83" width="9" height="1" fill="#fff"/><rect x="72" y="83" width="9" height="1" fill="#fff"/><rect x="82" y="83" width="10" height="1" fill="#fff"/><rect x="93" y="83" width="9" height="1" fill="#fff"/><rect x="6" y="83" width="3" height="1" fill="#cfcfcf"/><rect x="11" y="83" width="12" height="1" fill="#cfcfcf"/><rect x="6" y="85" width="4" height="1" fill="#fff"/><rect x="11" y="85" width="19" height="1" fill="#fff"/><rect x="31" y="85" width="9" height="1" fill="#fff"/><rect x="41" y="85" width="9" height="1" fill="#fff"/><rect x="51" y="85" width="10" height="1" fill="#fff"/><rect x="62" y="85" width="9" height="1" fill="#fff"/><rect x="72" y="85" width="9" height="1" fill="#fff"/><rect x="82" y="85" width="10" height="1" fill="#fff"/><rect x="93" y="85" width="9" height="1" fill="#fff"/><rect x="6" y="85" width="3" height="1" fill="#cfcfcf"/><rect x="11" y="85" width="9" height="1" fill="#cfcfcf"/><rect x="6" y="88" width="4" height="1" fill="#fff"/><rect x="11" y="88" width="19" height="1" fill="#fff"/><rect x="31" y="88" width="9" height="1" fill="#fff"/><rect x="41" y="88" width="9" height="1" fill="#fff"/><rect x="51" y="88" width="10" height="1" fill="#fff"/><rect x="62" y="88" width="9" height="1" fill="#fff"/><rect x="72" y="88" width="9" height="1" fill="#fff"/><rect x="82" y="88" width="10" height="1" fill="#fff"/><rect x="93" y="88" width="9" height="1" fill="#fff"/><rect x="6" y="88" width="3" height="1" fill="#cfcfcf"/><rect x="11" y="88" width="10" height="1" fill="#cfcfcf"/><rect x="6" y="91" width="4" height="1" fill="#fff"/><rect x="11" y="91" width="19" height="1" fill="#fff"/><rect x="31" y="91" width="9" height="1" fill="#fff"/><rect x="41" y="91" width="9" height="1" fill="#fff"/><rect x="51" y="91" width="10" height="1" fill="#fff"/><rect x="62" y="91" width="9" height="1" fill="#fff"/><rect x="72" y="91" width="9" height="1" fill="#fff"/><rect x="82" y="91" width="10" height="1" fill="#fff"/><rect x="93" y="91" width="9" height="1" fill="#fff"/><rect x="6" y="91" width="3" height="1" fill="#cfcfcf"/><rect x="11" y="91" width="11" height="1" fill="#cfcfcf"/><rect x="6" y="93" width="4" height="1" fill="#fff"/><rect x="11" y="93" width="19" height="1" fill="#fff"/><rect x="31" y="93" width="9" height="1" fill="#fff"/><rect x="41" y="93" width="9" height="1" fill="#fff"/><rect x="51" y="93" width="10" height="1" fill="#fff"/><rect x="62" y="93" width="9" height="1" fill="#fff"/><rect x="72" y="93" width="9" height="1" fill="#fff"/><rect x="82" y="93" width="10" height="1" fill="#fff"/><rect x="93" y="93" width="9" height="1" fill="#fff"/><rect x="6" y="93" width="3" height="1" fill="#cfcfcf"/><rect x="11" y="93" width="10" height="1" fill="#cfcfcf"/><rect x="6" y="96" width="4" height="1" fill="#fff"/><rect x="11" y="96" width="19" height="1" fill="#fff"/><rect x="31" y="96" width="9" height="1" fill="#fff"/><rect x="41" y="96" width="9" height="1" fill="#fff"/><rect x="51" y="96" width="10" height="1" fill="#fff"/><rect x="62" y="96" width="9" height="1" fill="#fff"/><rect x="72" y="96" width="9" height="1" fill="#fff"/><rect x="82" y="96" width="10" height="1" fill="#fff"/><rect x="93" y="96" width="9" height="1" fill="#fff"/><rect x="6" y="96" width="3" height="1" fill="#cfcfcf"/><rect x="11" y="96" width="12" height="1" fill="#cfcfcf"/><rect x="6" y="98" width="4" height="1" fill="#fff"/><rect x="11" y="98" width="19" height="1" fill="#fff"/><rect x="31" y="98" width="9" height="1" fill="#fff"/><rect x="41" y="98" width="9" height="1" fill="#fff"/><rect x="51" y="98" width="10" height="1" fill="#fff"/><rect x="62" y="98" width="9" height="1" fill="#fff"/><rect x="72" y="98" width="9" height="1" fill="#fff"/><rect x="82" y="98" width="10" height="1" fill="#fff"/><rect x="93" y="98" width="9" height="1" fill="#fff"/><rect x="6" y="98" width="3" height="1" fill="#cfcfcf"/><rect x="11" y="98" width="9" height="1" fill="#cfcfcf"/><rect x="6" y="101" width="4" height="1" fill="#fff"/><rect x="11" y="101" width="19" height="1" fill="#fff"/><rect x="31" y="101" width="9" height="1" fill="#fff"/><rect x="41" y="101" width="9" height="1" fill="#fff"/><rect x="51" y="101" width="10" height="1" fill="#fff"/><rect x="62" y="101" width="9" height="1" fill="#fff"/><rect x="72" y="101" width="9" height="1" fill="#fff"/><rect x="82" y="101" width="10" height="1" fill="#fff"/><rect x="93" y="101" width="9" height="1" fill="#fff"/><rect x="6" y="101" width="3" height="1" fill="#cfcfcf"/><rect x="11" y="101" width="10" height="1" fill="#cfcfcf"/><rect x="6" y="104" width="4" height="1" fill="#fff"/><rect x="11" y="104" width="19" height="1" fill="#fff"/><rect x="31" y="104" width="9" height="1" fill="#fff"/><rect x="41" y="104" width="9" height="1" fill="#fff"/><rect x="51" y="104" width="10" height="1" fill="#fff"/><rect x="62" y="104" width="9" height="1" fill="#fff"/><rect x="72" y="104" width="9" height="1" fill="#fff"/><rect x="82" y="104" width="10" height="1" fill="#fff"/><rect x="93" y="104" width="9" height="1" fill="#fff"/><rect x="6" y="104" width="3" height="1" fill="#cfcfcf"/><rect x="11" y="104" width="11" height="1" fill="#cfcfcf"/><rect x="6" y="106" width="4" height="1" fill="#fff"/><rect x="11" y="106" width="19" height="1" fill="#fff"/><rect x="31" y="106" width="9" height="1" fill="#fff"/><rect x="41" y="106" width="9" height="1" fill="#fff"/><rect x="51" y="106" width="10" height="1" fill="#fff"/><rect x="62" y="106" width="9" height="1" fill="#fff"/><rect x="72" y="106" width="9" height="1" fill="#fff"/><rect x="82" y="106" width="10" height="1" fill="#fff"/><rect x="93" y="106" width="9" height="1" fill="#fff"/><rect x="6" y="106" width="3" height="1" fill="#cfcfcf"/><rect x="11" y="106" width="9" height="1" fill="#cfcfcf"/><rect x="6" y="109" width="4" height="1" fill="#fff"/><rect x="11" y="109" width="19" height="1" fill="#fff"/><rect x="31" y="109" width="9" height="1" fill="#fff"/><rect x="41" y="109" width="9" height="1" fill="#fff"/><rect x="51" y="109" width="10" height="1" fill="#fff"/><rect x="62" y="109" width="9" height="1" fill="#fff"/><rect x="72" y="109" width="9" height="1" fill="#fff"/><rect x="82" y="109" width="10" height="1" fill="#fff"/><rect x="93" y="109" width="9" height="1" fill="#fff"/><rect x="6" y="109" width="3" height="1" fill="#cfcfcf"/><rect x="11" y="109" width="12" height="1" fill="#cfcfcf"/><rect x="6" y="111" width="4" height="1" fill="#fff"/><rect x="11" y="111" width="19" height="1" fill="#fff"/><rect x="31" y="111" width="9" height="1" fill="#fff"/><rect x="41" y="111" width="9" height="1" fill="#fff"/><rect x="51" y="111" width="10" height="1" fill="#fff"/><rect x="62" y="111" width="9" height="1" fill="#fff"/><rect x="72" y="111" width="9" height="1" fill="#fff"/><rect x="82" y="111" width="10" height="1" fill="#fff"/><rect x="93" y="111" width="9" height="1" fill="#fff"/><rect x="6" y="111" width="3" height="1" fill="#cfcfcf"/><rect x="11" y="111" width="9" height="1" fill="#cfcfcf"/><rect x="6" y="114" width="4" height="1" fill="#fff"/><rect x="11" y="114" width="19" height="1" fill="#fff"/><rect x="31" y="114" width="9" height="1" fill="#fff"/><rect x="41" y="114" width="9" height="1" fill="#fff"/><rect x="51" y="114" width="10" height="1" fill="#fff"/><rect x="62" y="114" width="9" height="1" fill="#fff"/><rect x="72" y="114" width="9" height="1" fill="#fff"/><rect x="82" y="114" width="10" height="1" fill="#fff"/><rect x="93" y="114" width="9" height="1" fill="#fff"/><rect x="6" y="114" width="3" height="1" fill="#cfcfcf"/><rect x="11" y="114" width="10" height="1" fill="#cfcfcf"/><rect x="6" y="117" width="4" height="1" fill="#fff"/><rect x="11" y="117" width="19" height="1" fill="#fff"/><rect x="31" y="117" width="9" height="1" fill="#fff"/><rect x="41" y="117" width="9" height="1" fill="#fff"/><rect x="51" y="117" width="10" height="1" fill="#fff"/><rect x="62" y="117" width="9" height="1" fill="#fff"/><rect x="72" y="117" width="9" height="1" fill="#fff"/><rect x="82" y="117" width="10" height="1" fill="#fff"/><rect x="93" y="117" width="9" height="1" fill="#fff"/><rect x="6" y="117" width="3" height="1" fill="#cfcfcf"/><rect x="11" y="117" width="11" height="1" fill="#cfcfcf"/><rect x="6" y="119" width="4" height="1" fill="#fff"/><rect x="11" y="119" width="19" height="1" fill="#fff"/><rect x="31" y="119" width="9" height="1" fill="#fff"/><rect x="41" y="119" width="9" height="1" fill="#fff"/><rect x="51" y="119" width="10" height="1" fill="#fff"/><rect x="62" y="119" width="9" height="1" fill="#fff"/><rect x="72" y="119" width="9" height="1" fill="#fff"/><rect x="82" y="119" width="10" height="1" fill="#fff"/><rect x="93" y="119" width="9" height="1" fill="#fff"/><rect x="6" y="119" width="3" height="1" fill="#cfcfcf"/><rect x="11" y="119" width="10" height="1" fill="#cfcfcf"/><rect x="6" y="122" width="4" height="1" fill="#fff"/><rect x="11" y="122" width="19" height="1" fill="#fff"/><rect x="31" y="122" width="9" height="1" fill="#fff"/><rect x="41" y="122" width="9" height="1" fill="#fff"/><rect x="51" y="122" width="10" height="1" fill="#fff"/><rect x="62" y="122" width="9" height="1" fill="#fff"/><rect x="72" y="122" width="9" height="1" fill="#fff"/><rect x="82" y="122" width="10" height="1" fill="#fff"/><rect x="93" y="122" width="9" height="1" fill="#fff"/><rect x="6" y="122" width="3" height="1" fill="#cfcfcf"/><rect x="11" y="122" width="12" height="1" fill="#cfcfcf"/><rect x="6" y="124" width="4" height="1" fill="#fff"/><rect x="11" y="124" width="19" height="1" fill="#fff"/><rect x="31" y="124" width="9" height="1" fill="#fff"/><rect x="41" y="124" width="9" height="1" fill="#fff"/><rect x="51" y="124" width="10" height="1" fill="#fff"/><rect x="62" y="124" width="9" height="1" fill="#fff"/><rect x="72" y="124" width="9" height="1" fill="#fff"/><rect x="82" y="124" width="10" height="1" fill="#fff"/><rect x="93" y="124" width="9" height="1" fill="#fff"/><rect x="6" y="124" width="3" height="1" fill="#cfcfcf"/><rect x="11" y="124" width="9" height="1" fill="#cfcfcf"/><rect x="6" y="127" width="4" height="1" fill="#fff"/><rect x="11" y="127" width="19" height="1" fill="#fff"/><rect x="31" y="127" width="9" height="1" fill="#fff"/><rect x="41" y="127" width="9" height="1" fill="#fff"/><rect x="51" y="127" width="10" height="1" fill="#fff"/><rect x="62" y="127" width="9" height="1" fill="#fff"/><rect x="72" y="127" width="9" height="1" fill="#fff"/><rect x="82" y="127" width="10" height="1" fill="#fff"/><rect x="93" y="127" width="9" height="1" fill="#fff"/><rect x="6" y="127" width="3" height="1" fill="#cfcfcf"/><rect x="11" y="127" width="10" height="1" fill="#cfcfcf"/><rect x="6" y="130" width="4" height="1" fill="#fff"/><rect x="11" y="130" width="19" height="1" fill="#fff"/><rect x="31" y="130" width="9" height="1" fill="#fff"/><rect x="41" y="130" width="9" height="1" fill="#fff"/><rect x="51" y="130" width="10" height="1" fill="#fff"/><rect x="62" y="130" width="9" height="1" fill="#fff"/><rect x="72" y="130" width="9" height="1" fill="#fff"/><rect x="82" y="130" width="10" height="1" fill="#fff"/><rect x="93" y="130" width="9" height="1" fill="#fff"/><rect x="6" y="130" width="3" height="1" fill="#cfcfcf"/><rect x="11" y="130" width="11" height="1" fill="#cfcfcf"/><rect x="6" y="132" width="4" height="1" fill="#fff"/><rect x="11" y="132" width="19" height="1" fill="#fff"/><rect x="31" y="132" width="9" height="1" fill="#fff"/><rect x="41" y="132" width="9" height="1" fill="#fff"/><rect x="51" y="132" width="10" height="1" fill="#fff"/><rect x="62" y="132" width="9" height="1" fill="#fff"/><rect x="72" y="132" width="9" height="1" fill="#fff"/><rect x="82" y="132" width="10" height="1" fill="#fff"/><rect x="93" y="132" width="9" height="1" fill="#fff"/><rect x="6" y="132" width="3" height="1" fill="#cfcfcf"/><rect x="11" y="132" width="9" height="1" fill="#cfcfcf"/><rect x="6" y="135" width="4" height="1" fill="#fff"/><rect x="11" y="135" width="19" height="1" fill="#fff"/><rect x="31" y="135" width="9" height="1" fill="#fff"/><rect x="41" y="135" width="9" height="1" fill="#fff"/><rect x="51" y="135" width="10" height="1" fill="#fff"/><rect x="62" y="135" width="9" height="1" fill="#fff"/><rect x="72" y="135" width="9" height="1" fill="#fff"/><rect x="82" y="135" width="10" height="1" fill="#fff"/><rect x="93" y="135" width="9" height="1" fill="#fff"/><rect x="6" y="135" width="3" height="1" fill="#cfcfcf"/><rect x="11" y="135" width="12" height="1" fill="#cfcfcf"/><rect x="6" y="137" width="24" height="4" fill="#fff"/><rect x="31" y="137" width="9" height="4" fill="#fff"/><rect x="41" y="137" width="9" height="4" fill="#fff"/><rect x="51" y="137" width="10" height="4" fill="#fff"/><rect x="62" y="137" width="9" height="4" fill="#fff"/><rect x="72" y="137" width="9" height="4" fill="#fff"/><rect x="82" y="137" width="10" height="4" fill="#fff"/><rect x="93" y="137" width="9" height="4" fill="#fff"/><rect x="8" y="139" width="9" height="1" fill="#cfcfcf"/><rect x="100" y="145" width="1" height="1" fill="#bbb"/></svg>
<svg class="a" style="left:90px;top:731px" width="107" height="152" viewBox="0 0 107 152" shape-rendering="crispEdges"><rect width="107" height="152" fill="#fff"/><rect x="5" y="5" width="98" height="15" fill="#8a8a8a"/><rect x="6" y="6" width="4" height="4" fill="#d9d9d9"/><rect x="11" y="6" width="19" height="4" fill="#d9d9d9"/><rect x="31" y="6" width="9" height="4" fill="#d9d9d9"/><rect x="41" y="6" width="9" height="4" fill="#d9d9d9"/><rect x="51" y="6" width="10" height="4" fill="#d9d9d9"/><rect x="62" y="6" width="9" height="4" fill="#d9d9d9"/><rect x="72" y="6" width="9" height="4" fill="#d9d9d9"/><rect x="82" y="6" width="10" height="4" fill="#d9d9d9"/><rect x="93" y="6" width="9" height="4" fill="#d9d9d9"/><rect x="17" y="7" width="6" height="1" fill="#888"/><rect x="6" y="12" width="4" height="1" fill="#fff"/><rect x="11" y="12" width="19" height="1" fill="#fff"/><rect x="31" y="12" width="9" height="1" fill="#fff"/><rect x="41" y="12" width="9" height="1" fill="#fff"/><rect x="51" y="12" width="10" height="1" fill="#fff"/><rect x="62" y="12" width="9" height="1" fill="#fff"/><rect x="72" y="12" width="9" height="1" fill="#fff"/><rect x="82" y="12" width="10" height="1" fill="#fff"/><rect x="93" y="12" width="9" height="1" fill="#fff"/><rect x="6" y="12" width="3" height="1" fill="#cfcfcf"/><rect x="11" y="12" width="10" height="1" fill="#cfcfcf"/><rect x="6" y="15" width="24" height="4" fill="#fff"/><rect x="31" y="15" width="9" height="4" fill="#fff"/><rect x="41" y="15" width="9" height="4" fill="#fff"/><rect x="51" y="15" width="10" height="4" fill="#fff"/><rect x="62" y="15" width="9" height="4" fill="#fff"/><rect x="72" y="15" width="9" height="4" fill="#fff"/><rect x="82" y="15" width="10" height="4" fill="#fff"/><rect x="93" y="15" width="9" height="4" fill="#fff"/><rect x="8" y="17" width="9" height="1" fill="#cfcfcf"/><rect x="100" y="145" width="1" height="1" fill="#bbb"/></svg>
<div class="a" style="left:123px;top:293px;width:40px;text-align:center;color:#fff;font-size:13px;line-height:13px;-webkit-text-stroke:0.3px #fff">1</div>
<div class="a" style="left:123px;top:494px;width:40px;text-align:center;color:#fff;font-size:13px;line-height:13px;-webkit-text-stroke:0.3px #fff">2</div>
<div class="a" style="left:123px;top:695px;width:40px;text-align:center;color:#fff;font-size:13px;line-height:13px;-webkit-text-stroke:0.3px #fff">3</div>
<div class="a" style="left:123px;top:896px;width:40px;text-align:center;color:#fff;font-size:13px;line-height:13px;-webkit-text-stroke:0.3px #fff">4</div>
<div class="a sb" style="left:286px"></div>
<svg class="a" style="left:286px;top:104px" width="15" height="816" viewBox="286 104 15 816"><path d="M289 114.8 L293.5 110 L298 114.8Z M289 908 L298 908 L293.5 913Z" fill="#8a8a8a"/><rect x="289.2" y="122" width="8.7" height="202" rx="4.35" fill="#8a8a8a"/></svg>
<div class="a" style="left:301px;top:104px;width:1px;height:816px;background:#585858"></div><div class="a" style="left:302px;top:104px;width:1px;height:816px;background:#202020"></div>
<div id="main" class="a"></div>
<div class="a" style="left:301px;top:104px;width:1605px;height:4px;background:linear-gradient(#1e1e1e,#282828)"></div>
<div class="a" style="left:602px;top:108px;width:6px;height:813px;background:linear-gradient(90deg,#282828,#1f1f1f)"></div>
<div class="a" style="left:608px;top:107px;width:992px;height:814px;background:#121212"></div>
<svg class="a" style="left:609px;top:108px" width="990" height="813" viewBox="609 108 990 813"><rect x="609" y="108" width="990" height="813" fill="#fff"/><g font-family="Liberation Serif" font-weight="bold" fill="#000"><text x="1102" y="180" font-size="25.5" text-anchor="middle">DANH SÁCH ĐĂNG KÝ KHOẢN THU</text><text x="1102" y="214" font-size="19.6" text-anchor="middle">Lớp: 10A</text><text x="1102" y="249" font-size="19.6" text-anchor="middle">Đến ngày 03/09/2025</text></g><rect x="654.75" y="261.5" width="899.0" height="48.30000000000001" fill="#d3d3d3"/><g stroke="#000" stroke-width="1.5" fill="none"><path d="M654.75 261.5 V934.8399999999999"/><path d="M702.75 261.5 V934.8399999999999"/><path d="M882.75 261.5 V934.8399999999999"/><path d="M978.75 261.5 V934.8399999999999"/><path d="M1074.75 261.5 V934.8399999999999"/><path d="M1170.75 261.5 V934.8399999999999"/><path d="M1266.75 261.5 V934.8399999999999"/><path d="M1362.75 261.5 V934.8399999999999"/><path d="M1458.75 261.5 V934.8399999999999"/><path d="M1553.75 261.5 V934.8399999999999"/><path d="M654.75 261.5 H1553.75"/><path d="M654.75 309.80 H1553.75"/><path d="M654.75 333.84 H1553.75"/><path d="M654.75 357.88 H1553.75"/><path d="M654.75 381.92 H1553.75"/><path d="M654.75 405.96 H1553.75"/><path d="M654.75 430.00 H1553.75"/><path d="M654.75 454.04 H1553.75"/><path d="M654.75 478.08 H1553.75"/><path d="M654.75 502.12 H1553.75"/><path d="M654.75 526.16 H1553.75"/><path d="M654.75 550.20 H1553.75"/><path d="M654.75 574.24 H1553.75"/><path d="M654.75 598.28 H1553.75"/><path d="M654.75 622.32 H1553.75"/><path d="M654.75 646.36 H1553.75"/><path d="M654.75 670.40 H1553.75"/><path d="M654.75 694.44 H1553.75"/><path d="M654.75 718.48 H1553.75"/><path d="M654.75 742.52 H1553.75"/><path d="M654.75 766.56 H1553.75"/><path d="M654.75 790.60 H1553.75"/><path d="M654.75 814.64 H1553.75"/><path d="M654.75 838.68 H1553.75"/><path d="M654.75 862.72 H1553.75"/><path d="M654.75 886.76 H1553.75"/><path d="M654.75 910.80 H1553.75"/><path d="M654.75 934.84 H1553.75"/></g><g font-family="Liberation Serif" font-weight="bold" font-size="16" fill="#000" text-anchor="middle"><text x="676.75" y="291">STT</text><text x="790.75" y="291">Họ và tên</text><text x="928.75" y="281.5">Học 2</text><text x="928.75" y="300.6">buổi/ngày</text><text x="1024.75" y="281.5">Sổ liên lạc</text><text x="1024.75" y="300.6">điện tử</text><text x="1120.75" y="291">Tiền gửi xe</text><text x="1216.75" y="281.5">Tiền ăn bán</text><text x="1216.75" y="300.6">trú</text><text x="1312.75" y="281.5">Trang thiết</text><text x="1312.75" y="300.6">bị</text><text x="1408.75" y="281.5">Đồng phục</text><text x="1408.75" y="300.6">học sinh</text><text x="1504.25" y="291">Ghi chú</text></g><g font-family="Liberation Serif" font-size="16" fill="#000"><text x="679.75" y="327.70" text-anchor="middle">1</text><text x="706" y="327.70">Giang Ngọc Diệp</text><text x="679.75" y="351.74" text-anchor="middle">2</text><text x="706" y="351.74">Trần Vũ Minh Duy</text><text x="679.75" y="375.78" text-anchor="middle">3</text><text x="706" y="375.78">Trần Huyền Dương</text><text x="679.75" y="399.82" text-anchor="middle">4</text><text x="706" y="399.82">Bùi Minh Hải Đăng</text><text x="679.75" y="423.86" text-anchor="middle">5</text><text x="706" y="423.86">Nguyễn Đức Hải</text><text x="679.75" y="447.90" text-anchor="middle">6</text><text x="706" y="447.90">Nguyễn Phương Hoa</text><text x="679.75" y="471.94" text-anchor="middle">7</text><text x="706" y="471.94">Hoàng Phú Nam Hưng</text><text x="679.75" y="495.98" text-anchor="middle">8</text><text x="706" y="495.98">Vũ Đức Song Hưng</text><text x="679.75" y="520.02" text-anchor="middle">9</text><text x="706" y="520.02">Nguyễn Ngọc Khánh</text><text x="679.75" y="544.06" text-anchor="middle">10</text><text x="706" y="544.06">Vũ Đăng Khoa</text><text x="679.75" y="568.10" text-anchor="middle">11</text><text x="706" y="568.10">Bùi Minh Khuê</text><text x="679.75" y="592.14" text-anchor="middle">12</text><text x="706" y="592.14">Phạm Thị Phương Linh</text><text x="679.75" y="616.18" text-anchor="middle">13</text><text x="706" y="616.18">Phạm Bảo Lộc</text><text x="679.75" y="640.22" text-anchor="middle">14</text><text x="706" y="640.22">Phạm Hiếu Minh</text><text x="679.75" y="664.26" text-anchor="middle">15</text><text x="706" y="664.26">Nguyễn Huyền My</text><text x="679.75" y="688.30" text-anchor="middle">16</text><text x="706" y="688.30">Nguyễn Xuân Mỹ</text><text x="679.75" y="712.34" text-anchor="middle">17</text><text x="706" y="712.34">Phạm Bảo Nam</text><text x="679.75" y="736.38" text-anchor="middle">18</text><text x="706" y="736.38">Tạ Bảo Ngọc</text><text x="679.75" y="760.42" text-anchor="middle">19</text><text x="706" y="760.42">Lê Bảo Thư</text><text x="679.75" y="784.46" text-anchor="middle">20</text><text x="706" y="784.46">Vũ Minh Trang</text><text x="679.75" y="808.50" text-anchor="middle">21</text><text x="706" y="808.50">Nguyễn Xuân Trúc</text><text x="679.75" y="832.54" text-anchor="middle">22</text><text x="706" y="832.54">Nguyễn Quang Tùng</text><text x="679.75" y="856.58" text-anchor="middle">23</text><text x="706" y="856.58">Nguyễn Khánh Vũ</text><text x="679.75" y="880.62" text-anchor="middle">24</text><text x="706" y="880.62">Lê Hoàng Bảo Vy</text><text x="679.75" y="904.66" text-anchor="middle">25</text><text x="706" y="904.66">Phạm Hoàng Phương Vy</text><text x="679.75" y="928.70" text-anchor="middle">26</text><text x="706" y="928.70">Nguyễn Phương Nhi</text></g></svg>
<div class="a" style="left:1599px;top:108px;width:6px;height:813px;background:linear-gradient(90deg,#1f1f1f,#282828)"></div>
<div class="a sb" style="left:1906px"></div>
<svg class="a" style="left:1906px;top:104px" width="15" height="816" viewBox="1906 104 15 816"><path d="M1909 114.6 L1913.5 110 L1918 114.6Z M1909 908 L1918 908 L1913.5 913Z" fill="#8a8a8a"/><rect x="1909.2" y="122" width="8.7" height="28" rx="4.35" fill="#8a8a8a"/></svg>
<div class="a" style="left:0;top:920px;width:1922px;height:1px;background:#000"></div>
</body></html>
